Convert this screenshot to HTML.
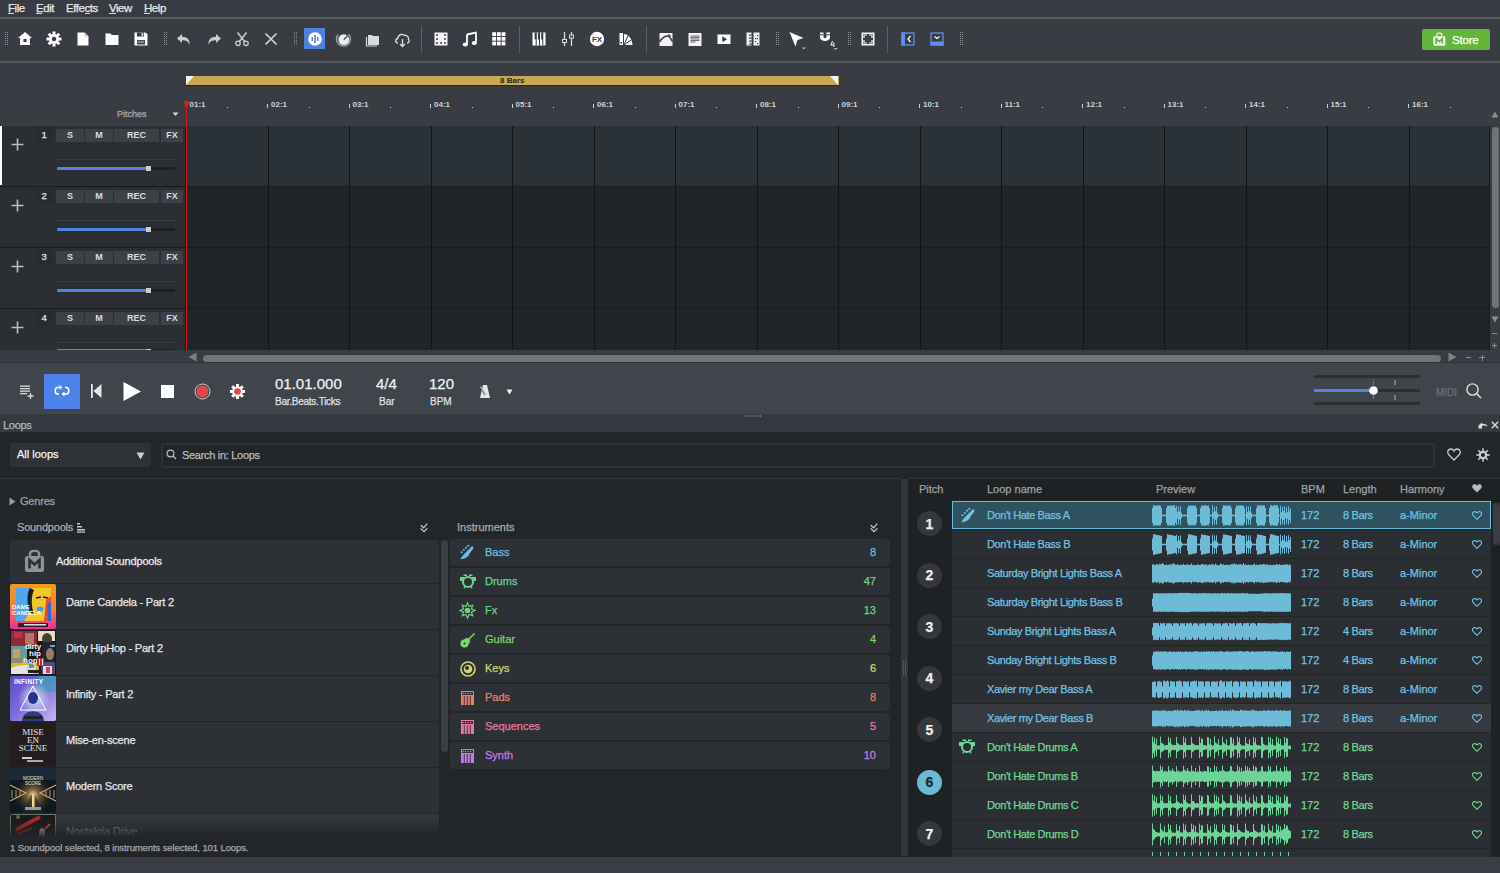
<!DOCTYPE html><html><head><meta charset="utf-8"><style>
html,body{margin:0;padding:0}
body{width:1500px;height:873px;overflow:hidden;position:relative;background:#24272a;font-family:"Liberation Sans", sans-serif;-webkit-text-stroke:0.25px currentColor}
div{box-sizing:border-box}
svg{position:absolute;overflow:visible}
.u{text-decoration:underline;text-underline-offset:2px}
</style></head><body>
<div style="position:absolute;left:0px;top:0px;width:1500px;height:17px;background:#383b41;"></div>
<div style="position:absolute;left:0px;top:17px;width:1500px;height:2px;background:#5b5e63;"></div>
<div style="position:absolute;left:8px;top:3px;font-size:11.5px;line-height:1;color:#e8e8e8;font-weight:normal;white-space:nowrap;letter-spacing:-0.45px">File</div>
<div style="position:absolute;left:8px;top:13px;width:6px;height:1px;background:#d8d8d8;"></div>
<div style="position:absolute;left:36px;top:3px;font-size:11.5px;line-height:1;color:#e8e8e8;font-weight:normal;white-space:nowrap;letter-spacing:-0.45px">Edit</div>
<div style="position:absolute;left:36px;top:13px;width:6px;height:1px;background:#d8d8d8;"></div>
<div style="position:absolute;left:66px;top:3px;font-size:11.5px;line-height:1;color:#e8e8e8;font-weight:normal;white-space:nowrap;letter-spacing:-0.45px">Effects</div>
<div style="position:absolute;left:85px;top:13px;width:5px;height:1px;background:#d8d8d8;"></div>
<div style="position:absolute;left:109px;top:3px;font-size:11.5px;line-height:1;color:#e8e8e8;font-weight:normal;white-space:nowrap;letter-spacing:-0.45px">View</div>
<div style="position:absolute;left:109px;top:13px;width:7px;height:1px;background:#d8d8d8;"></div>
<div style="position:absolute;left:144px;top:3px;font-size:11.5px;line-height:1;color:#e8e8e8;font-weight:normal;white-space:nowrap;letter-spacing:-0.45px">Help</div>
<div style="position:absolute;left:144px;top:13px;width:6px;height:1px;background:#d8d8d8;"></div>
<div style="position:absolute;left:0px;top:19px;width:1500px;height:42px;background:#393c42;"></div>
<div style="position:absolute;left:0px;top:61px;width:1500px;height:2px;background:#54575c;"></div>
<svg style="left:5px;top:32px;" width="3" height="14" viewBox="0 0 3 14"><rect x="0" y="0" width="1" height="1" fill="#8a8d92"/><rect x="0" y="2" width="1" height="1" fill="#8a8d92"/><rect x="0" y="4" width="1" height="1" fill="#8a8d92"/><rect x="0" y="6" width="1" height="1" fill="#8a8d92"/><rect x="0" y="8" width="1" height="1" fill="#8a8d92"/><rect x="0" y="10" width="1" height="1" fill="#8a8d92"/><rect x="0" y="12" width="1" height="1" fill="#8a8d92"/><rect x="2" y="0" width="1" height="1" fill="#8a8d92"/><rect x="2" y="2" width="1" height="1" fill="#8a8d92"/><rect x="2" y="4" width="1" height="1" fill="#8a8d92"/><rect x="2" y="6" width="1" height="1" fill="#8a8d92"/><rect x="2" y="8" width="1" height="1" fill="#8a8d92"/><rect x="2" y="10" width="1" height="1" fill="#8a8d92"/><rect x="2" y="12" width="1" height="1" fill="#8a8d92"/></svg>
<svg style="left:164px;top:32px;" width="3" height="14" viewBox="0 0 3 14"><rect x="0" y="0" width="1" height="1" fill="#8a8d92"/><rect x="0" y="2" width="1" height="1" fill="#8a8d92"/><rect x="0" y="4" width="1" height="1" fill="#8a8d92"/><rect x="0" y="6" width="1" height="1" fill="#8a8d92"/><rect x="0" y="8" width="1" height="1" fill="#8a8d92"/><rect x="0" y="10" width="1" height="1" fill="#8a8d92"/><rect x="0" y="12" width="1" height="1" fill="#8a8d92"/><rect x="2" y="0" width="1" height="1" fill="#8a8d92"/><rect x="2" y="2" width="1" height="1" fill="#8a8d92"/><rect x="2" y="4" width="1" height="1" fill="#8a8d92"/><rect x="2" y="6" width="1" height="1" fill="#8a8d92"/><rect x="2" y="8" width="1" height="1" fill="#8a8d92"/><rect x="2" y="10" width="1" height="1" fill="#8a8d92"/><rect x="2" y="12" width="1" height="1" fill="#8a8d92"/></svg>
<svg style="left:294px;top:32px;" width="3" height="14" viewBox="0 0 3 14"><rect x="0" y="0" width="1" height="1" fill="#8a8d92"/><rect x="0" y="2" width="1" height="1" fill="#8a8d92"/><rect x="0" y="4" width="1" height="1" fill="#8a8d92"/><rect x="0" y="6" width="1" height="1" fill="#8a8d92"/><rect x="0" y="8" width="1" height="1" fill="#8a8d92"/><rect x="0" y="10" width="1" height="1" fill="#8a8d92"/><rect x="0" y="12" width="1" height="1" fill="#8a8d92"/><rect x="2" y="0" width="1" height="1" fill="#8a8d92"/><rect x="2" y="2" width="1" height="1" fill="#8a8d92"/><rect x="2" y="4" width="1" height="1" fill="#8a8d92"/><rect x="2" y="6" width="1" height="1" fill="#8a8d92"/><rect x="2" y="8" width="1" height="1" fill="#8a8d92"/><rect x="2" y="10" width="1" height="1" fill="#8a8d92"/><rect x="2" y="12" width="1" height="1" fill="#8a8d92"/></svg>
<svg style="left:776px;top:32px;" width="3" height="14" viewBox="0 0 3 14"><rect x="0" y="0" width="1" height="1" fill="#8a8d92"/><rect x="0" y="2" width="1" height="1" fill="#8a8d92"/><rect x="0" y="4" width="1" height="1" fill="#8a8d92"/><rect x="0" y="6" width="1" height="1" fill="#8a8d92"/><rect x="0" y="8" width="1" height="1" fill="#8a8d92"/><rect x="0" y="10" width="1" height="1" fill="#8a8d92"/><rect x="0" y="12" width="1" height="1" fill="#8a8d92"/><rect x="2" y="0" width="1" height="1" fill="#8a8d92"/><rect x="2" y="2" width="1" height="1" fill="#8a8d92"/><rect x="2" y="4" width="1" height="1" fill="#8a8d92"/><rect x="2" y="6" width="1" height="1" fill="#8a8d92"/><rect x="2" y="8" width="1" height="1" fill="#8a8d92"/><rect x="2" y="10" width="1" height="1" fill="#8a8d92"/><rect x="2" y="12" width="1" height="1" fill="#8a8d92"/></svg>
<svg style="left:848px;top:32px;" width="3" height="14" viewBox="0 0 3 14"><rect x="0" y="0" width="1" height="1" fill="#8a8d92"/><rect x="0" y="2" width="1" height="1" fill="#8a8d92"/><rect x="0" y="4" width="1" height="1" fill="#8a8d92"/><rect x="0" y="6" width="1" height="1" fill="#8a8d92"/><rect x="0" y="8" width="1" height="1" fill="#8a8d92"/><rect x="0" y="10" width="1" height="1" fill="#8a8d92"/><rect x="0" y="12" width="1" height="1" fill="#8a8d92"/><rect x="2" y="0" width="1" height="1" fill="#8a8d92"/><rect x="2" y="2" width="1" height="1" fill="#8a8d92"/><rect x="2" y="4" width="1" height="1" fill="#8a8d92"/><rect x="2" y="6" width="1" height="1" fill="#8a8d92"/><rect x="2" y="8" width="1" height="1" fill="#8a8d92"/><rect x="2" y="10" width="1" height="1" fill="#8a8d92"/><rect x="2" y="12" width="1" height="1" fill="#8a8d92"/></svg>
<svg style="left:960px;top:32px;" width="3" height="14" viewBox="0 0 3 14"><rect x="0" y="0" width="1" height="1" fill="#8a8d92"/><rect x="0" y="2" width="1" height="1" fill="#8a8d92"/><rect x="0" y="4" width="1" height="1" fill="#8a8d92"/><rect x="0" y="6" width="1" height="1" fill="#8a8d92"/><rect x="0" y="8" width="1" height="1" fill="#8a8d92"/><rect x="0" y="10" width="1" height="1" fill="#8a8d92"/><rect x="0" y="12" width="1" height="1" fill="#8a8d92"/><rect x="2" y="0" width="1" height="1" fill="#8a8d92"/><rect x="2" y="2" width="1" height="1" fill="#8a8d92"/><rect x="2" y="4" width="1" height="1" fill="#8a8d92"/><rect x="2" y="6" width="1" height="1" fill="#8a8d92"/><rect x="2" y="8" width="1" height="1" fill="#8a8d92"/><rect x="2" y="10" width="1" height="1" fill="#8a8d92"/><rect x="2" y="12" width="1" height="1" fill="#8a8d92"/></svg>
<svg style="left:17.0px;top:31.0px;" width="16" height="16" viewBox="0 0 16 16"><path d="M8 1 L15 7 L13 7 L13 14 L3 14 L3 7 L1 7 Z" fill="#fff"/><rect x="6.5" y="8" width="3" height="3" fill="#393c42"/></svg>
<svg style="left:46.0px;top:31.0px;" width="16" height="16" viewBox="0 0 16 16"><rect x="6.5" y="0.5" width="3" height="4" fill="#fff" transform="rotate(0 8 8)"/><rect x="6.5" y="0.5" width="3" height="4" fill="#fff" transform="rotate(45 8 8)"/><rect x="6.5" y="0.5" width="3" height="4" fill="#fff" transform="rotate(90 8 8)"/><rect x="6.5" y="0.5" width="3" height="4" fill="#fff" transform="rotate(135 8 8)"/><rect x="6.5" y="0.5" width="3" height="4" fill="#fff" transform="rotate(180 8 8)"/><rect x="6.5" y="0.5" width="3" height="4" fill="#fff" transform="rotate(225 8 8)"/><rect x="6.5" y="0.5" width="3" height="4" fill="#fff" transform="rotate(270 8 8)"/><rect x="6.5" y="0.5" width="3" height="4" fill="#fff" transform="rotate(315 8 8)"/><circle cx="8" cy="8" r="5" fill="#fff"/><circle cx="8" cy="8" r="2.2" fill="#393c42"/></svg>
<svg style="left:75.0px;top:31.0px;" width="16" height="16" viewBox="0 0 16 16"><path d="M2.5 1.5 L9.5 1.5 L13.5 5.5 L13.5 14.5 L2.5 14.5 Z" fill="#fff"/><path d="M9.5 1.5 L9.5 5.5 L13.5 5.5" fill="#c9ccd0"/></svg>
<svg style="left:104.0px;top:31.0px;" width="16" height="16" viewBox="0 0 16 16"><path d="M1.5 2.5 L6.5 2.5 L8 4 L14.5 4 L14.5 14 L1.5 14 Z" fill="#fff"/></svg>
<svg style="left:133.0px;top:31.0px;" width="16" height="16" viewBox="0 0 16 16"><path d="M1.5 1.5 L12.5 1.5 L14.5 3.5 L14.5 14.5 L1.5 14.5 Z" fill="#fff"/><rect x="4" y="1.5" width="7" height="4" fill="#393c42"/><rect x="8.5" y="2.3" width="1.8" height="2.4" fill="#fff"/><rect x="4" y="9" width="8" height="4.5" fill="#393c42"/><rect x="4.5" y="9.8" width="7" height="0.8" fill="#aaa"/><rect x="4.5" y="11.3" width="7" height="0.8" fill="#aaa"/></svg>
<svg style="left:176.0px;top:31.0px;" width="16" height="16" viewBox="0 0 16 16"><path d="M6 3 L1 7.5 L6 12 L6 9.3 C10 9.3 12.5 10.5 13.5 14 C14 9 11.5 5.8 6 5.8 Z" fill="#c8cbd0"/></svg>
<svg style="left:206.0px;top:31.0px;" width="16" height="16" viewBox="0 0 16 16"><path d="M10 3 L15 7.5 L10 12 L10 9.3 C6 9.3 3.5 10.5 2.5 14 C2 9 4.5 5.8 10 5.8 Z" fill="#c8cbd0"/></svg>
<svg style="left:234.0px;top:31.0px;" width="16" height="16" viewBox="0 0 16 16"><path d="M3.5 1.5 L11 11 M12.5 1.5 L5 11" stroke="#c8cbd0" stroke-width="1.6"/><circle cx="4" cy="12.3" r="2.2" fill="none" stroke="#c8cbd0" stroke-width="1.3"/><circle cx="12" cy="12.3" r="2.2" fill="none" stroke="#c8cbd0" stroke-width="1.3"/></svg>
<svg style="left:263.0px;top:31.0px;" width="16" height="16" viewBox="0 0 16 16"><path d="M2.5 2.5 L13.5 13.5 M13.5 2.5 L2.5 13.5" stroke="#d0d3d7" stroke-width="1.7"/></svg>
<div style="position:absolute;left:304px;top:28px;width:21px;height:21px;background:#4f82e0;"></div>
<svg style="left:306.5px;top:31.0px;" width="16" height="16" viewBox="0 0 16 16"><circle cx="8" cy="8" r="6.8" fill="#fff"/><rect x="7.2" y="4" width="1.6" height="8" fill="#4f82e0"/><rect x="4.6" y="6" width="1.4" height="4" fill="#4f82e0"/><rect x="10" y="6" width="1.4" height="4" fill="#4f82e0"/></svg>
<svg style="left:335.0px;top:31.0px;" width="16" height="16" viewBox="0 0 16 16"><path d="M3.2 3.5 A7 7 0 1 0 13.5 3.2" stroke="#9fa2a7" stroke-width="1.4" fill="none"/><circle cx="8.8" cy="8.6" r="5.4" fill="#ececec"/><path d="M8.8 8.6 L12.6 4.8" stroke="#393c42" stroke-width="1.3"/></svg>
<svg style="left:365.0px;top:31.0px;" width="16" height="16" viewBox="0 0 16 16"><path d="M3 4 L7 4 L8 5 L14 5 L14 14 L3 14 Z" fill="#d8dbde"/><path d="M1.5 6 L1.5 15 L12 15" stroke="#d8dbde" stroke-width="1.2" fill="none"/></svg>
<svg style="left:394.0px;top:31.0px;" width="16" height="16" viewBox="0 0 16 16"><path d="M4 12 C1 12 1 7.5 3.8 7.5 C4 4 8 2 10.5 4.5 C13 4 15 6 14.5 8.5 C16 9.5 15 12 13 12" fill="none" stroke="#d8dbde" stroke-width="1.4"/><path d="M8.5 8 L8.5 15.5 M6 13 L8.5 15.5 L11 13" stroke="#d8dbde" stroke-width="1.4" fill="none"/></svg>
<div style="position:absolute;left:421px;top:26px;width:1px;height:27px;background:#5d6065;"></div>
<div style="position:absolute;left:519px;top:26px;width:1px;height:27px;background:#5d6065;"></div>
<div style="position:absolute;left:646px;top:26px;width:1px;height:27px;background:#5d6065;"></div>
<div style="position:absolute;left:887px;top:26px;width:1px;height:27px;background:#5d6065;"></div>
<svg style="left:433.0px;top:31.0px;" width="16" height="16" viewBox="0 0 16 16"><rect x="1.5" y="1.5" width="13" height="13" fill="#f2f2f2"/><rect x="3.2" y="3.2" width="1.7" height="1.7" fill="#393c42"/><rect x="11.1" y="3.2" width="1.7" height="1.7" fill="#393c42"/><rect x="3.2" y="7.2" width="1.7" height="1.7" fill="#393c42"/><rect x="11.1" y="7.2" width="1.7" height="1.7" fill="#393c42"/><rect x="3.2" y="11.1" width="1.7" height="1.7" fill="#393c42"/><rect x="7.2" y="11.1" width="1.7" height="1.7" fill="#393c42"/><rect x="11.1" y="11.1" width="1.7" height="1.7" fill="#393c42"/></svg>
<svg style="left:462.0px;top:31.0px;" width="16" height="16" viewBox="0 0 16 16"><path d="M5 3.5 L14 1.5 L14 12" stroke="#fff" stroke-width="1.8" fill="none"/><path d="M5 3.5 L5 13.5" stroke="#fff" stroke-width="1.8"/><ellipse cx="3.3" cy="13.5" rx="2.6" ry="2" fill="#fff"/><ellipse cx="12.3" cy="12" rx="2.6" ry="2" fill="#fff"/></svg>
<svg style="left:491.0px;top:31.0px;" width="16" height="16" viewBox="0 0 16 16"><rect x="1.2" y="1.2" width="3.8" height="3.8" fill="#fff"/><rect x="1.2" y="5.9" width="3.8" height="3.8" fill="#fff"/><rect x="1.2" y="10.6" width="3.8" height="3.8" fill="#fff"/><rect x="5.9" y="1.2" width="3.8" height="3.8" fill="#fff"/><rect x="5.9" y="5.9" width="3.8" height="3.8" fill="#fff"/><rect x="5.9" y="10.6" width="3.8" height="3.8" fill="#fff"/><rect x="10.6" y="1.2" width="3.8" height="3.8" fill="#fff"/><rect x="10.6" y="5.9" width="3.8" height="3.8" fill="#fff"/><rect x="10.6" y="10.6" width="3.8" height="3.8" fill="#fff"/></svg>
<svg style="left:531.0px;top:31.0px;" width="16" height="16" viewBox="0 0 16 16"><rect x="1.5" y="1.5" width="13" height="13" fill="#fff"/><rect x="4.7" y="1.5" width="1" height="13" fill="#393c42"/><rect x="8" y="1.5" width="1" height="13" fill="#393c42"/><rect x="11.3" y="1.5" width="1" height="13" fill="#393c42"/><rect x="3.6" y="1.5" width="1.8" height="7" fill="#393c42"/><rect x="6.9" y="1.5" width="1.8" height="7" fill="#393c42"/><rect x="10.2" y="1.5" width="1.8" height="7" fill="#393c42"/></svg>
<svg style="left:560.0px;top:31.0px;" width="16" height="16" viewBox="0 0 16 16"><path d="M4.5 1 L4.5 15 M11.5 1 L11.5 15" stroke="#d8dbde" stroke-width="1.3"/><rect x="2" y="8" width="5" height="4" fill="#d8dbde"/><rect x="9" y="3.5" width="5" height="4" fill="#d8dbde"/><rect x="3" y="9" width="3" height="2" fill="#393c42"/><rect x="10" y="4.5" width="3" height="2" fill="#393c42"/></svg>
<svg style="left:589.0px;top:31.0px;" width="16" height="16" viewBox="0 0 16 16"><circle cx="8" cy="8" r="7.2" fill="#fff"/><text x="8" y="11" font-size="8" font-weight="bold" text-anchor="middle" fill="#393c42" font-family="Liberation Sans">FX</text></svg>
<svg style="left:618.0px;top:31.0px;" width="16" height="16" viewBox="0 0 16 16"><rect x="1.5" y="2" width="3.5" height="12" fill="#fff"/><path d="M6 14 L6 3 C10 3 14 7 14.5 14 Z" fill="#fff"/><path d="M6 14 L10 4.5 M6 14 L13 9" stroke="#393c42" stroke-width="1"/><rect x="2.5" y="11" width="1.5" height="1.5" fill="#393c42"/></svg>
<svg style="left:657.5px;top:31.0px;" width="16" height="16" viewBox="0 0 16 16"><rect x="1.5" y="2" width="13" height="13" fill="#f2f2f2"/><path d="M1.5 11 C4 6.5 8 4.5 10.5 5.2 C11.5 5.5 12.5 7 14.5 10.5" stroke="#393c42" stroke-width="1.6" fill="none"/><path d="M10.5 3.5 L12.5 5.5" stroke="#393c42" stroke-width="1.2"/></svg>
<svg style="left:686.5px;top:31.0px;" width="16" height="16" viewBox="0 0 16 16"><rect x="1.5" y="2" width="13" height="13" fill="#f2f2f2"/><rect x="3.5" y="4.5" width="9" height="1" fill="#6a6d72"/><rect x="3.5" y="6" width="9" height="1" fill="#6a6d72"/><rect x="3.5" y="7.5" width="9" height="1" fill="#6a6d72"/><rect x="3.5" y="9" width="9" height="1" fill="#6a6d72"/><rect x="3.5" y="10.5" width="5" height="1" fill="#6a6d72"/></svg>
<svg style="left:715.5px;top:31.0px;" width="16" height="16" viewBox="0 0 16 16"><rect x="1.5" y="3.5" width="13" height="9.5" fill="#fff"/><path d="M6.3 5.3 L11 8.3 L6.3 11.3 Z" fill="#393c42"/></svg>
<svg style="left:745.0px;top:31.0px;" width="16" height="16" viewBox="0 0 16 16"><rect x="1.5" y="1.5" width="5" height="13" fill="#f2f2f2"/><rect x="8.5" y="1.5" width="6" height="13" fill="#f2f2f2"/><rect x="4" y="3.5" width="2.5" height="1.2" fill="#393c42"/><rect x="4" y="6.5" width="2.5" height="1.2" fill="#393c42"/><rect x="4" y="9.5" width="2.5" height="1.2" fill="#393c42"/><rect x="4" y="12.5" width="2.5" height="1.2" fill="#393c42"/><rect x="12" y="4" width="1.2" height="1.2" fill="#393c42"/><rect x="10" y="7" width="1.2" height="1.2" fill="#393c42"/><rect x="12" y="7" width="1.2" height="1.2" fill="#393c42"/><rect x="10" y="10" width="1.2" height="1.2" fill="#393c42"/><rect x="12" y="12" width="1.2" height="1.2" fill="#393c42"/></svg>
<svg style="left:788.0px;top:30.5px;" width="18" height="18" viewBox="0 0 18 18"><path d="M1.5 1 L15.5 7 L9.5 9 L7.5 15.5 Z" fill="#fff"/><path d="M13.5 16.5 L18 16.5 L15.75 18.5 Z" fill="#aaadb2"/></svg>
<svg style="left:819.0px;top:30.5px;" width="18" height="18" viewBox="0 0 18 18"><path d="M1 1.5 L4.5 1.5 L4.5 6 C4.5 7.6 7.5 7.6 7.5 6 L7.5 1.5 L11 1.5 L11 6.5 C11 11 1 11 1 6.5 Z" fill="#fff"/><rect x="1" y="3.3" width="3.5" height="1" fill="#393c42"/><rect x="7.5" y="3.3" width="3.5" height="1" fill="#393c42"/><path d="M13.5 10 L12 14 L15.5 14 M14.8 11.5 L14.8 16" stroke="#e6e6e6" stroke-width="1.1" fill="none"/><path d="M14.5 17 L19 17 L16.75 19 Z" fill="#aaadb2"/></svg>
<svg style="left:860.0px;top:31.0px;" width="16" height="16" viewBox="0 0 16 16"><rect x="1.5" y="1.5" width="13" height="13" fill="#f4f4f4"/><rect x="3" y="3" width="10" height="10" fill="#393c42"/><path d="M4 7 L4 4 L7 4 M9 4 L12 4 L12 7 M12 9 L12 12 L9 12 M7 12 L4 12 L4 9" stroke="#f4f4f4" stroke-width="1.2" fill="none"/></svg>
<svg style="left:899.5px;top:31.0px;" width="16" height="16" viewBox="0 0 16 16"><rect x="2" y="2" width="12" height="12" fill="none" stroke="#5a8ef0" stroke-width="1.3"/><rect x="1.5" y="1.5" width="3.5" height="13" fill="#5a8ef0"/><path d="M10.5 5 L8 8 L10.5 11" stroke="#fff" stroke-width="1.2" fill="none"/></svg>
<svg style="left:929.0px;top:31.0px;" width="16" height="16" viewBox="0 0 16 16"><rect x="2" y="2" width="12" height="12" fill="none" stroke="#5a8ef0" stroke-width="1.3"/><rect x="1.5" y="10.5" width="13" height="4" fill="#5a8ef0"/><path d="M5.5 5.5 L8 7.5 L10.5 5.5" stroke="#fff" stroke-width="1.2" fill="none"/></svg>
<div style="position:absolute;left:1422px;top:29px;width:68px;height:21px;background:#64b63a;border-radius:2px"></div>
<svg style="left:1433px;top:32px;" width="13" height="14" viewBox="0 0 13 14"><path d="M3.8 4.5 L3.8 2.6 C3.8 0.6 8.7 0.6 8.7 2.6 L8.7 4.5" stroke="#f4f0f4" stroke-width="1.2" fill="none"/><rect x="0.3" y="4.3" width="12" height="9.4" rx="0.8" fill="#f4f0f4"/><path d="M3.2 11.8 L3.2 6.8 L6.25 9.6 L9.3 6.8 L9.3 11.8" stroke="#64b63a" stroke-width="1.7" fill="none" stroke-linejoin="miter"/></svg>
<div style="position:absolute;left:1452px;top:35px;font-size:11.5px;line-height:1;color:#ffffff;font-weight:normal;white-space:nowrap;letter-spacing:-0.2px">Store</div>
<div style="position:absolute;left:0px;top:63px;width:1500px;height:63px;background:#393c42;"></div>
<div style="position:absolute;left:186px;top:76px;width:653px;height:9px;background:#c6a955;"></div>
<div style="position:absolute;left:186px;top:85px;width:653px;height:1px;background:#23262a;"></div>
<svg style="left:186px;top:76px;" width="8" height="9" viewBox="0 0 8 9"><path d="M0 0 L8 0 L0 9 Z" fill="#f2f2f2"/></svg>
<svg style="left:830px;top:76px;" width="8" height="9" viewBox="0 0 8 9"><path d="M0 0 L8 0 L8 9 Z" fill="#f2f2f2"/></svg>
<div style="position:absolute;left:500px;top:77px;font-size:8px;line-height:1;color:#2a2410;font-weight:bold;white-space:nowrap;;-webkit-text-stroke:0">8 Bars</div>
<div style="position:absolute;left:189.5px;top:101px;font-size:8px;line-height:1;color:#c9d3de;font-weight:bold;white-space:nowrap;;-webkit-text-stroke:0">01:1</div>
<div style="position:absolute;left:227.25px;top:107px;width:1px;height:1px;background:#c8d0d8;"></div>
<div style="position:absolute;left:267.0px;top:104px;width:1px;height:4px;background:#c8d0d8;"></div>
<div style="position:absolute;left:271.0px;top:101px;font-size:8px;line-height:1;color:#c9d3de;font-weight:bold;white-space:nowrap;;-webkit-text-stroke:0">02:1</div>
<div style="position:absolute;left:308.75px;top:107px;width:1px;height:1px;background:#c8d0d8;"></div>
<div style="position:absolute;left:348.5px;top:104px;width:1px;height:4px;background:#c8d0d8;"></div>
<div style="position:absolute;left:352.5px;top:101px;font-size:8px;line-height:1;color:#c9d3de;font-weight:bold;white-space:nowrap;;-webkit-text-stroke:0">03:1</div>
<div style="position:absolute;left:390.25px;top:107px;width:1px;height:1px;background:#c8d0d8;"></div>
<div style="position:absolute;left:430.0px;top:104px;width:1px;height:4px;background:#c8d0d8;"></div>
<div style="position:absolute;left:434.0px;top:101px;font-size:8px;line-height:1;color:#c9d3de;font-weight:bold;white-space:nowrap;;-webkit-text-stroke:0">04:1</div>
<div style="position:absolute;left:471.75px;top:107px;width:1px;height:1px;background:#c8d0d8;"></div>
<div style="position:absolute;left:511.5px;top:104px;width:1px;height:4px;background:#c8d0d8;"></div>
<div style="position:absolute;left:515.5px;top:101px;font-size:8px;line-height:1;color:#c9d3de;font-weight:bold;white-space:nowrap;;-webkit-text-stroke:0">05:1</div>
<div style="position:absolute;left:553.25px;top:107px;width:1px;height:1px;background:#c8d0d8;"></div>
<div style="position:absolute;left:593.0px;top:104px;width:1px;height:4px;background:#c8d0d8;"></div>
<div style="position:absolute;left:597.0px;top:101px;font-size:8px;line-height:1;color:#c9d3de;font-weight:bold;white-space:nowrap;;-webkit-text-stroke:0">06:1</div>
<div style="position:absolute;left:634.75px;top:107px;width:1px;height:1px;background:#c8d0d8;"></div>
<div style="position:absolute;left:674.5px;top:104px;width:1px;height:4px;background:#c8d0d8;"></div>
<div style="position:absolute;left:678.5px;top:101px;font-size:8px;line-height:1;color:#c9d3de;font-weight:bold;white-space:nowrap;;-webkit-text-stroke:0">07:1</div>
<div style="position:absolute;left:716.25px;top:107px;width:1px;height:1px;background:#c8d0d8;"></div>
<div style="position:absolute;left:756.0px;top:104px;width:1px;height:4px;background:#c8d0d8;"></div>
<div style="position:absolute;left:760.0px;top:101px;font-size:8px;line-height:1;color:#c9d3de;font-weight:bold;white-space:nowrap;;-webkit-text-stroke:0">08:1</div>
<div style="position:absolute;left:797.75px;top:107px;width:1px;height:1px;background:#c8d0d8;"></div>
<div style="position:absolute;left:837.5px;top:104px;width:1px;height:4px;background:#c8d0d8;"></div>
<div style="position:absolute;left:841.5px;top:101px;font-size:8px;line-height:1;color:#c9d3de;font-weight:bold;white-space:nowrap;;-webkit-text-stroke:0">09:1</div>
<div style="position:absolute;left:879.25px;top:107px;width:1px;height:1px;background:#c8d0d8;"></div>
<div style="position:absolute;left:919.0px;top:104px;width:1px;height:4px;background:#c8d0d8;"></div>
<div style="position:absolute;left:923.0px;top:101px;font-size:8px;line-height:1;color:#c9d3de;font-weight:bold;white-space:nowrap;;-webkit-text-stroke:0">10:1</div>
<div style="position:absolute;left:960.75px;top:107px;width:1px;height:1px;background:#c8d0d8;"></div>
<div style="position:absolute;left:1000.5px;top:104px;width:1px;height:4px;background:#c8d0d8;"></div>
<div style="position:absolute;left:1004.5px;top:101px;font-size:8px;line-height:1;color:#c9d3de;font-weight:bold;white-space:nowrap;;-webkit-text-stroke:0">11:1</div>
<div style="position:absolute;left:1042.25px;top:107px;width:1px;height:1px;background:#c8d0d8;"></div>
<div style="position:absolute;left:1082.0px;top:104px;width:1px;height:4px;background:#c8d0d8;"></div>
<div style="position:absolute;left:1086.0px;top:101px;font-size:8px;line-height:1;color:#c9d3de;font-weight:bold;white-space:nowrap;;-webkit-text-stroke:0">12:1</div>
<div style="position:absolute;left:1123.75px;top:107px;width:1px;height:1px;background:#c8d0d8;"></div>
<div style="position:absolute;left:1163.5px;top:104px;width:1px;height:4px;background:#c8d0d8;"></div>
<div style="position:absolute;left:1167.5px;top:101px;font-size:8px;line-height:1;color:#c9d3de;font-weight:bold;white-space:nowrap;;-webkit-text-stroke:0">13:1</div>
<div style="position:absolute;left:1205.25px;top:107px;width:1px;height:1px;background:#c8d0d8;"></div>
<div style="position:absolute;left:1245.0px;top:104px;width:1px;height:4px;background:#c8d0d8;"></div>
<div style="position:absolute;left:1249.0px;top:101px;font-size:8px;line-height:1;color:#c9d3de;font-weight:bold;white-space:nowrap;;-webkit-text-stroke:0">14:1</div>
<div style="position:absolute;left:1286.75px;top:107px;width:1px;height:1px;background:#c8d0d8;"></div>
<div style="position:absolute;left:1326.5px;top:104px;width:1px;height:4px;background:#c8d0d8;"></div>
<div style="position:absolute;left:1330.5px;top:101px;font-size:8px;line-height:1;color:#c9d3de;font-weight:bold;white-space:nowrap;;-webkit-text-stroke:0">15:1</div>
<div style="position:absolute;left:1368.25px;top:107px;width:1px;height:1px;background:#c8d0d8;"></div>
<div style="position:absolute;left:1408.0px;top:104px;width:1px;height:4px;background:#c8d0d8;"></div>
<div style="position:absolute;left:1412.0px;top:101px;font-size:8px;line-height:1;color:#c9d3de;font-weight:bold;white-space:nowrap;;-webkit-text-stroke:0">16:1</div>
<div style="position:absolute;left:1449.75px;top:107px;width:1px;height:1px;background:#c8d0d8;"></div>
<div style="position:absolute;left:117px;top:110px;font-size:9px;line-height:1;color:#a9adb2;font-weight:normal;white-space:nowrap;">Pitches</div>
<svg style="left:172px;top:112px;" width="7" height="5" viewBox="0 0 7 5"><path d="M0.5 0.5 L6.5 0.5 L3.5 4 Z" fill="#d5d8dc"/></svg>
<div style="position:absolute;left:0px;top:126px;width:1490px;height:224px;background:#1a1c1f;"></div>
<div style="position:absolute;left:0px;top:126px;width:185px;height:59.5px;background:#2b2e32;"></div>
<div style="position:absolute;left:187px;top:126px;width:1302px;height:59.5px;background:#2a3237;"></div>
<div style="position:absolute;left:268px;top:126px;width:1px;height:61.5px;background:#111316;"></div>
<div style="position:absolute;left:349px;top:126px;width:1px;height:61.5px;background:#111316;"></div>
<div style="position:absolute;left:431px;top:126px;width:1px;height:61.5px;background:#111316;"></div>
<div style="position:absolute;left:512px;top:126px;width:1px;height:61.5px;background:#111316;"></div>
<div style="position:absolute;left:594px;top:126px;width:1px;height:61.5px;background:#111316;"></div>
<div style="position:absolute;left:675px;top:126px;width:1px;height:61.5px;background:#111316;"></div>
<div style="position:absolute;left:757px;top:126px;width:1px;height:61.5px;background:#111316;"></div>
<div style="position:absolute;left:838px;top:126px;width:1px;height:61.5px;background:#111316;"></div>
<div style="position:absolute;left:920px;top:126px;width:1px;height:61.5px;background:#111316;"></div>
<div style="position:absolute;left:1001px;top:126px;width:1px;height:61.5px;background:#111316;"></div>
<div style="position:absolute;left:1083px;top:126px;width:1px;height:61.5px;background:#111316;"></div>
<div style="position:absolute;left:1164px;top:126px;width:1px;height:61.5px;background:#111316;"></div>
<div style="position:absolute;left:1246px;top:126px;width:1px;height:61.5px;background:#111316;"></div>
<div style="position:absolute;left:1327px;top:126px;width:1px;height:61.5px;background:#111316;"></div>
<div style="position:absolute;left:1409px;top:126px;width:1px;height:61.5px;background:#111316;"></div>
<div style="position:absolute;left:12px;top:137px;font-size:0px;line-height:1;color:#fff;font-weight:normal;white-space:nowrap;">+</div>
<svg style="left:11px;top:138px;" width="13" height="13" viewBox="0 0 13 13"><path d="M6.5 0.5 L6.5 12.5 M0.5 6.5 L12.5 6.5" stroke="#b9bcc0" stroke-width="1.6"/></svg>
<div style="position:absolute;left:35px;top:127px;width:19px;height:16px;background:#282b2f;"></div>
<div style="position:absolute;left:41.5px;top:130px;font-size:9.5px;line-height:1;color:#e3e8ee;font-weight:normal;white-space:nowrap;">1</div>
<div style="position:absolute;left:56px;top:128.5px;width:28px;height:13px;background:#3c4047;"></div>
<div style="position:absolute;left:56px;top:130.5px;width:28px;text-align:center;font-size:9px;line-height:1;color:#dadde0;font-weight:bold;-webkit-text-stroke:0">S</div>
<div style="position:absolute;left:85px;top:128.5px;width:28px;height:13px;background:#3c4047;"></div>
<div style="position:absolute;left:85px;top:130.5px;width:28px;text-align:center;font-size:9px;line-height:1;color:#dadde0;font-weight:bold;-webkit-text-stroke:0">M</div>
<div style="position:absolute;left:114px;top:128.5px;width:45px;height:13px;background:#3c4047;"></div>
<div style="position:absolute;left:114px;top:130.5px;width:45px;text-align:center;font-size:9px;line-height:1;color:#dadde0;font-weight:bold;-webkit-text-stroke:0">REC</div>
<div style="position:absolute;left:161px;top:128.5px;width:22px;height:13px;background:#3c4047;"></div>
<div style="position:absolute;left:161px;top:130.5px;width:22px;text-align:center;font-size:9px;line-height:1;color:#dadde0;font-weight:bold;-webkit-text-stroke:0">FX</div>
<svg style="left:56px;top:159px;" width="120" height="1" viewBox="0 0 120 1"><path d="M0 0.5 L120 0.5" stroke="#46494e" stroke-dasharray="1 1"/></svg>
<div style="position:absolute;left:57px;top:167px;width:118px;height:3px;background:#1d1f22;"></div>
<div style="position:absolute;left:57px;top:167px;width:91px;height:3px;background:#4f86e6;border-radius:1px"></div>
<div style="position:absolute;left:146px;top:166px;width:5px;height:5px;background:#c9ccd0;"></div>
<div style="position:absolute;left:0px;top:187px;width:185px;height:59.5px;background:#2b2e32;"></div>
<div style="position:absolute;left:187px;top:187px;width:1302px;height:59.5px;background:#222528;"></div>
<div style="position:absolute;left:268px;top:187px;width:1px;height:61.5px;background:#111316;"></div>
<div style="position:absolute;left:349px;top:187px;width:1px;height:61.5px;background:#111316;"></div>
<div style="position:absolute;left:431px;top:187px;width:1px;height:61.5px;background:#111316;"></div>
<div style="position:absolute;left:512px;top:187px;width:1px;height:61.5px;background:#111316;"></div>
<div style="position:absolute;left:594px;top:187px;width:1px;height:61.5px;background:#111316;"></div>
<div style="position:absolute;left:675px;top:187px;width:1px;height:61.5px;background:#111316;"></div>
<div style="position:absolute;left:757px;top:187px;width:1px;height:61.5px;background:#111316;"></div>
<div style="position:absolute;left:838px;top:187px;width:1px;height:61.5px;background:#111316;"></div>
<div style="position:absolute;left:920px;top:187px;width:1px;height:61.5px;background:#111316;"></div>
<div style="position:absolute;left:1001px;top:187px;width:1px;height:61.5px;background:#111316;"></div>
<div style="position:absolute;left:1083px;top:187px;width:1px;height:61.5px;background:#111316;"></div>
<div style="position:absolute;left:1164px;top:187px;width:1px;height:61.5px;background:#111316;"></div>
<div style="position:absolute;left:1246px;top:187px;width:1px;height:61.5px;background:#111316;"></div>
<div style="position:absolute;left:1327px;top:187px;width:1px;height:61.5px;background:#111316;"></div>
<div style="position:absolute;left:1409px;top:187px;width:1px;height:61.5px;background:#111316;"></div>
<div style="position:absolute;left:12px;top:198px;font-size:0px;line-height:1;color:#fff;font-weight:normal;white-space:nowrap;">+</div>
<svg style="left:11px;top:199px;" width="13" height="13" viewBox="0 0 13 13"><path d="M6.5 0.5 L6.5 12.5 M0.5 6.5 L12.5 6.5" stroke="#b9bcc0" stroke-width="1.6"/></svg>
<div style="position:absolute;left:35px;top:188px;width:19px;height:16px;background:#282b2f;"></div>
<div style="position:absolute;left:41.5px;top:191px;font-size:9.5px;line-height:1;color:#e3e8ee;font-weight:normal;white-space:nowrap;">2</div>
<div style="position:absolute;left:56px;top:189.5px;width:28px;height:13px;background:#3c4047;"></div>
<div style="position:absolute;left:56px;top:191.5px;width:28px;text-align:center;font-size:9px;line-height:1;color:#dadde0;font-weight:bold;-webkit-text-stroke:0">S</div>
<div style="position:absolute;left:85px;top:189.5px;width:28px;height:13px;background:#3c4047;"></div>
<div style="position:absolute;left:85px;top:191.5px;width:28px;text-align:center;font-size:9px;line-height:1;color:#dadde0;font-weight:bold;-webkit-text-stroke:0">M</div>
<div style="position:absolute;left:114px;top:189.5px;width:45px;height:13px;background:#3c4047;"></div>
<div style="position:absolute;left:114px;top:191.5px;width:45px;text-align:center;font-size:9px;line-height:1;color:#dadde0;font-weight:bold;-webkit-text-stroke:0">REC</div>
<div style="position:absolute;left:161px;top:189.5px;width:22px;height:13px;background:#3c4047;"></div>
<div style="position:absolute;left:161px;top:191.5px;width:22px;text-align:center;font-size:9px;line-height:1;color:#dadde0;font-weight:bold;-webkit-text-stroke:0">FX</div>
<svg style="left:56px;top:220px;" width="120" height="1" viewBox="0 0 120 1"><path d="M0 0.5 L120 0.5" stroke="#46494e" stroke-dasharray="1 1"/></svg>
<div style="position:absolute;left:57px;top:228px;width:118px;height:3px;background:#1d1f22;"></div>
<div style="position:absolute;left:57px;top:228px;width:91px;height:3px;background:#4f86e6;border-radius:1px"></div>
<div style="position:absolute;left:146px;top:227px;width:5px;height:5px;background:#c9ccd0;"></div>
<div style="position:absolute;left:0px;top:248px;width:185px;height:59.5px;background:#2b2e32;"></div>
<div style="position:absolute;left:187px;top:248px;width:1302px;height:59.5px;background:#222528;"></div>
<div style="position:absolute;left:268px;top:248px;width:1px;height:61.5px;background:#111316;"></div>
<div style="position:absolute;left:349px;top:248px;width:1px;height:61.5px;background:#111316;"></div>
<div style="position:absolute;left:431px;top:248px;width:1px;height:61.5px;background:#111316;"></div>
<div style="position:absolute;left:512px;top:248px;width:1px;height:61.5px;background:#111316;"></div>
<div style="position:absolute;left:594px;top:248px;width:1px;height:61.5px;background:#111316;"></div>
<div style="position:absolute;left:675px;top:248px;width:1px;height:61.5px;background:#111316;"></div>
<div style="position:absolute;left:757px;top:248px;width:1px;height:61.5px;background:#111316;"></div>
<div style="position:absolute;left:838px;top:248px;width:1px;height:61.5px;background:#111316;"></div>
<div style="position:absolute;left:920px;top:248px;width:1px;height:61.5px;background:#111316;"></div>
<div style="position:absolute;left:1001px;top:248px;width:1px;height:61.5px;background:#111316;"></div>
<div style="position:absolute;left:1083px;top:248px;width:1px;height:61.5px;background:#111316;"></div>
<div style="position:absolute;left:1164px;top:248px;width:1px;height:61.5px;background:#111316;"></div>
<div style="position:absolute;left:1246px;top:248px;width:1px;height:61.5px;background:#111316;"></div>
<div style="position:absolute;left:1327px;top:248px;width:1px;height:61.5px;background:#111316;"></div>
<div style="position:absolute;left:1409px;top:248px;width:1px;height:61.5px;background:#111316;"></div>
<div style="position:absolute;left:12px;top:259px;font-size:0px;line-height:1;color:#fff;font-weight:normal;white-space:nowrap;">+</div>
<svg style="left:11px;top:260px;" width="13" height="13" viewBox="0 0 13 13"><path d="M6.5 0.5 L6.5 12.5 M0.5 6.5 L12.5 6.5" stroke="#b9bcc0" stroke-width="1.6"/></svg>
<div style="position:absolute;left:35px;top:249px;width:19px;height:16px;background:#282b2f;"></div>
<div style="position:absolute;left:41.5px;top:252px;font-size:9.5px;line-height:1;color:#e3e8ee;font-weight:normal;white-space:nowrap;">3</div>
<div style="position:absolute;left:56px;top:250.5px;width:28px;height:13px;background:#3c4047;"></div>
<div style="position:absolute;left:56px;top:252.5px;width:28px;text-align:center;font-size:9px;line-height:1;color:#dadde0;font-weight:bold;-webkit-text-stroke:0">S</div>
<div style="position:absolute;left:85px;top:250.5px;width:28px;height:13px;background:#3c4047;"></div>
<div style="position:absolute;left:85px;top:252.5px;width:28px;text-align:center;font-size:9px;line-height:1;color:#dadde0;font-weight:bold;-webkit-text-stroke:0">M</div>
<div style="position:absolute;left:114px;top:250.5px;width:45px;height:13px;background:#3c4047;"></div>
<div style="position:absolute;left:114px;top:252.5px;width:45px;text-align:center;font-size:9px;line-height:1;color:#dadde0;font-weight:bold;-webkit-text-stroke:0">REC</div>
<div style="position:absolute;left:161px;top:250.5px;width:22px;height:13px;background:#3c4047;"></div>
<div style="position:absolute;left:161px;top:252.5px;width:22px;text-align:center;font-size:9px;line-height:1;color:#dadde0;font-weight:bold;-webkit-text-stroke:0">FX</div>
<svg style="left:56px;top:281px;" width="120" height="1" viewBox="0 0 120 1"><path d="M0 0.5 L120 0.5" stroke="#46494e" stroke-dasharray="1 1"/></svg>
<div style="position:absolute;left:57px;top:289px;width:118px;height:3px;background:#1d1f22;"></div>
<div style="position:absolute;left:57px;top:289px;width:91px;height:3px;background:#4f86e6;border-radius:1px"></div>
<div style="position:absolute;left:146px;top:288px;width:5px;height:5px;background:#c9ccd0;"></div>
<div style="position:absolute;left:0px;top:309px;width:185px;height:59.5px;background:#2b2e32;"></div>
<div style="position:absolute;left:187px;top:309px;width:1302px;height:59.5px;background:#222528;"></div>
<div style="position:absolute;left:268px;top:309px;width:1px;height:61.5px;background:#111316;"></div>
<div style="position:absolute;left:349px;top:309px;width:1px;height:61.5px;background:#111316;"></div>
<div style="position:absolute;left:431px;top:309px;width:1px;height:61.5px;background:#111316;"></div>
<div style="position:absolute;left:512px;top:309px;width:1px;height:61.5px;background:#111316;"></div>
<div style="position:absolute;left:594px;top:309px;width:1px;height:61.5px;background:#111316;"></div>
<div style="position:absolute;left:675px;top:309px;width:1px;height:61.5px;background:#111316;"></div>
<div style="position:absolute;left:757px;top:309px;width:1px;height:61.5px;background:#111316;"></div>
<div style="position:absolute;left:838px;top:309px;width:1px;height:61.5px;background:#111316;"></div>
<div style="position:absolute;left:920px;top:309px;width:1px;height:61.5px;background:#111316;"></div>
<div style="position:absolute;left:1001px;top:309px;width:1px;height:61.5px;background:#111316;"></div>
<div style="position:absolute;left:1083px;top:309px;width:1px;height:61.5px;background:#111316;"></div>
<div style="position:absolute;left:1164px;top:309px;width:1px;height:61.5px;background:#111316;"></div>
<div style="position:absolute;left:1246px;top:309px;width:1px;height:61.5px;background:#111316;"></div>
<div style="position:absolute;left:1327px;top:309px;width:1px;height:61.5px;background:#111316;"></div>
<div style="position:absolute;left:1409px;top:309px;width:1px;height:61.5px;background:#111316;"></div>
<div style="position:absolute;left:12px;top:320px;font-size:0px;line-height:1;color:#fff;font-weight:normal;white-space:nowrap;">+</div>
<svg style="left:11px;top:321px;" width="13" height="13" viewBox="0 0 13 13"><path d="M6.5 0.5 L6.5 12.5 M0.5 6.5 L12.5 6.5" stroke="#b9bcc0" stroke-width="1.6"/></svg>
<div style="position:absolute;left:35px;top:310px;width:19px;height:16px;background:#282b2f;"></div>
<div style="position:absolute;left:41.5px;top:313px;font-size:9.5px;line-height:1;color:#e3e8ee;font-weight:normal;white-space:nowrap;">4</div>
<div style="position:absolute;left:56px;top:311.5px;width:28px;height:13px;background:#3c4047;"></div>
<div style="position:absolute;left:56px;top:313.5px;width:28px;text-align:center;font-size:9px;line-height:1;color:#dadde0;font-weight:bold;-webkit-text-stroke:0">S</div>
<div style="position:absolute;left:85px;top:311.5px;width:28px;height:13px;background:#3c4047;"></div>
<div style="position:absolute;left:85px;top:313.5px;width:28px;text-align:center;font-size:9px;line-height:1;color:#dadde0;font-weight:bold;-webkit-text-stroke:0">M</div>
<div style="position:absolute;left:114px;top:311.5px;width:45px;height:13px;background:#3c4047;"></div>
<div style="position:absolute;left:114px;top:313.5px;width:45px;text-align:center;font-size:9px;line-height:1;color:#dadde0;font-weight:bold;-webkit-text-stroke:0">REC</div>
<div style="position:absolute;left:161px;top:311.5px;width:22px;height:13px;background:#3c4047;"></div>
<div style="position:absolute;left:161px;top:313.5px;width:22px;text-align:center;font-size:9px;line-height:1;color:#dadde0;font-weight:bold;-webkit-text-stroke:0">FX</div>
<svg style="left:56px;top:342px;" width="120" height="1" viewBox="0 0 120 1"><path d="M0 0.5 L120 0.5" stroke="#46494e" stroke-dasharray="1 1"/></svg>
<div style="position:absolute;left:57px;top:350px;width:118px;height:3px;background:#1d1f22;"></div>
<div style="position:absolute;left:57px;top:350px;width:91px;height:3px;background:#4f86e6;border-radius:1px"></div>
<div style="position:absolute;left:146px;top:349px;width:5px;height:5px;background:#c9ccd0;"></div>
<div style="position:absolute;left:0px;top:126px;width:2px;height:59px;background:#ffffff;"></div>
<div style="position:absolute;left:186px;top:101px;width:1px;height:249px;background:#d41717;"></div>
<svg style="left:183px;top:101px;" width="7" height="7" viewBox="0 0 7 7"><path d="M0 0 L7 0 L3.5 7 Z" fill="#e01b1b"/></svg>
<div style="position:absolute;left:1490px;top:110px;width:10px;height:240px;background:#393c42;"></div>
<svg style="left:1491px;top:111px;" width="8" height="7" viewBox="0 0 8 7"><path d="M0.5 6.5 L4 0.5 L7.5 6.5 Z" fill="#8a8d92"/></svg>
<div style="position:absolute;left:1492px;top:127px;width:7px;height:181px;background:#6f7478;border-radius:3.5px"></div>
<svg style="left:1491px;top:316px;" width="8" height="7" viewBox="0 0 8 7"><path d="M0.5 0.5 L4 6.5 L7.5 0.5 Z" fill="#8a8d92"/></svg>
<div style="position:absolute;left:1492px;top:333px;width:5px;height:1px;background:#8a8d92;"></div>
<div style="position:absolute;left:1492px;top:345px;width:5px;height:1px;background:#8a8d92;"></div>
<div style="position:absolute;left:1494px;top:343px;width:1px;height:5px;background:#8a8d92;"></div>
<div style="position:absolute;left:0px;top:350px;width:1500px;height:13px;background:#383c42;"></div>
<svg style="left:188px;top:352px;" width="9" height="10" viewBox="0 0 9 10"><path d="M0.5 5 L8.5 0.5 L8.5 9.5 Z" fill="#7d8085"/></svg>
<div style="position:absolute;left:203px;top:355px;width:1238px;height:7px;background:#6f7478;border-radius:3.5px"></div>
<div style="position:absolute;left:0px;top:362px;width:1500px;height:2px;background:#30343a;"></div>
<div style="position:absolute;left:57px;top:349px;width:91px;height:1px;background:#4f86e6;"></div>
<div style="position:absolute;left:148px;top:349px;width:27px;height:1px;background:#1d1f22;"></div>
<div style="position:absolute;left:146px;top:349px;width:5px;height:1px;background:#c9ccd0;"></div>
<svg style="left:1448px;top:352px;" width="9" height="10" viewBox="0 0 9 10"><path d="M8.5 5 L0.5 0.5 L0.5 9.5 Z" fill="#7d8085"/></svg>
<div style="position:absolute;left:1466px;top:357px;width:5px;height:1px;background:#8a8d92;"></div>
<div style="position:absolute;left:1479px;top:357px;width:6px;height:1px;background:#8a8d92;"></div>
<div style="position:absolute;left:1481.5px;top:354.5px;width:1px;height:6px;background:#8a8d92;"></div>
<div style="position:absolute;left:0px;top:363px;width:1500px;height:51px;background:#3f454b;"></div>
<div style="position:absolute;left:44px;top:374px;width:36px;height:35px;background:#4f82e8;"></div>
<svg style="left:20px;top:385px;" width="14" height="14" viewBox="0 0 14 14"><rect x="0" y="0.5" width="10" height="1.3" fill="#d8dbde"/><rect x="0" y="3" width="10" height="1.3" fill="#d8dbde"/><rect x="0" y="5.5" width="10" height="1.3" fill="#d8dbde"/><rect x="0" y="8" width="7" height="1.3" fill="#d8dbde"/><path d="M10.5 8 L10.5 14 M7.5 11 L13.5 11" stroke="#d8dbde" stroke-width="1.3"/></svg>
<svg style="left:53px;top:383px;" width="18" height="16" viewBox="0 0 18 16"><path d="M7.5 4.5 L4.5 4.5 C1.5 4.5 1.5 11 4.5 11 L6 11" stroke="#fff" stroke-width="1.6" fill="none"/><path d="M10.5 11 L13.5 11 C16.5 11 16.5 4.5 13.5 4.5 L12 4.5" stroke="#fff" stroke-width="1.6" fill="none"/><path d="M6.5 2 L9.5 4.5 L6.5 7 Z" fill="#fff"/><path d="M11.5 8.5 L8.5 11 L11.5 13.5 Z" fill="#fff"/></svg>
<svg style="left:91px;top:384px;" width="11" height="14" viewBox="0 0 11 14"><rect x="0" y="0" width="1.8" height="14" fill="#e4e6e9"/><path d="M10.5 0 L2.5 7 L10.5 14 Z" fill="#e4e6e9"/></svg>
<svg style="left:123px;top:382px;" width="19" height="19" viewBox="0 0 19 19"><path d="M0.5 0 L18 9.5 L0.5 19 Z" fill="#ffffff"/></svg>
<div style="position:absolute;left:161px;top:385px;width:13px;height:13px;background:#ffffff;"></div>
<svg style="left:194px;top:383px;" width="17" height="17" viewBox="0 0 17 17"><circle cx="8.5" cy="8.5" r="7.5" fill="none" stroke="#c9ccd0" stroke-width="1"/><circle cx="8.5" cy="8.5" r="6" fill="#e8434a"/></svg>
<svg style="left:230px;top:384px;" width="15" height="15" viewBox="0 0 15 15"><rect x="6" y="0" width="3" height="4" fill="#fff" transform="rotate(0 7.5 7.5)"/><rect x="6" y="0" width="3" height="4" fill="#fff" transform="rotate(45 7.5 7.5)"/><rect x="6" y="0" width="3" height="4" fill="#fff" transform="rotate(90 7.5 7.5)"/><rect x="6" y="0" width="3" height="4" fill="#fff" transform="rotate(135 7.5 7.5)"/><rect x="6" y="0" width="3" height="4" fill="#fff" transform="rotate(180 7.5 7.5)"/><rect x="6" y="0" width="3" height="4" fill="#fff" transform="rotate(225 7.5 7.5)"/><rect x="6" y="0" width="3" height="4" fill="#fff" transform="rotate(270 7.5 7.5)"/><rect x="6" y="0" width="3" height="4" fill="#fff" transform="rotate(315 7.5 7.5)"/><circle cx="7.5" cy="7.5" r="5.3" fill="#fff"/><circle cx="7.5" cy="7.5" r="3.3" fill="#e8434a"/></svg>
<div style="position:absolute;left:275px;top:376px;font-size:15px;line-height:1;color:#f0f2f4;font-weight:normal;white-space:nowrap;">01.01.000</div>
<div style="position:absolute;left:275px;top:397px;font-size:10px;line-height:1;color:#dde0e4;font-weight:normal;white-space:nowrap;letter-spacing:-0.25px">Bar.Beats.Ticks</div>
<div style="position:absolute;left:376px;top:376px;font-size:15px;line-height:1;color:#f0f2f4;font-weight:normal;white-space:nowrap;">4/4</div>
<div style="position:absolute;left:379px;top:397px;font-size:10px;line-height:1;color:#dde0e4;font-weight:normal;white-space:nowrap;">Bar</div>
<div style="position:absolute;left:429px;top:376px;font-size:15px;line-height:1;color:#f0f2f4;font-weight:normal;white-space:nowrap;">120</div>
<div style="position:absolute;left:430px;top:397px;font-size:10px;line-height:1;color:#dde0e4;font-weight:normal;white-space:nowrap;">BPM</div>
<svg style="left:479px;top:384px;" width="12" height="15" viewBox="0 0 12 15"><path d="M4 1 L8 1 L11 14 L1 14 Z" fill="#e4e6e9"/><path d="M6 11 L1 2" stroke="#3d4147" stroke-width="1.6"/><path d="M6 11 L1.5 2.5" stroke="#e4e6e9" stroke-width="0.9"/></svg>
<svg style="left:506px;top:389px;" width="7" height="6" viewBox="0 0 7 6"><path d="M0.5 0.5 L6.5 0.5 L3.5 5.5 Z" fill="#f0f2f4"/></svg>
<div style="position:absolute;left:1314px;top:375px;width:106px;height:3px;background:#2c2f34;"></div>
<div style="position:absolute;left:1314px;top:402px;width:106px;height:3px;background:#2c2f34;"></div>
<div style="position:absolute;left:1314px;top:389px;width:106px;height:3px;background:#2c2f34;"></div>
<div style="position:absolute;left:1314px;top:389px;width:60px;height:3px;background:#4f86e6;"></div>
<div style="position:absolute;left:1373px;top:381px;width:1px;height:4px;background:#7a7d82;"></div>
<div style="position:absolute;left:1373px;top:395px;width:1px;height:4px;background:#7a7d82;"></div>
<div style="position:absolute;left:1394px;top:380px;width:2px;height:5px;background:#7a7d82;"></div>
<div style="position:absolute;left:1394px;top:395px;width:2px;height:5px;background:#7a7d82;"></div>
<svg style="left:1369px;top:386px;" width="9" height="9" viewBox="0 0 9 9"><circle cx="4.5" cy="4.5" r="4.3" fill="#fff"/></svg>
<div style="position:absolute;left:1436px;top:388px;font-size:10px;line-height:1;color:#6c6f74;font-weight:normal;white-space:nowrap;">MIDI</div>
<svg style="left:1466px;top:383px;" width="16" height="16" viewBox="0 0 16 16"><circle cx="6.5" cy="6.5" r="5.6" fill="none" stroke="#dfe2e5" stroke-width="1.4"/><path d="M10.5 10.5 L15 15" stroke="#dfe2e5" stroke-width="1.5"/></svg>
<div style="position:absolute;left:0px;top:414px;width:1500px;height:18px;background:#353940;"></div>
<div style="position:absolute;left:3px;top:420px;font-size:11px;line-height:1;color:#b3b7bd;font-weight:normal;white-space:nowrap;letter-spacing:-0.3px">Loops</div>
<svg style="left:1478px;top:422px;" width="10" height="7" viewBox="0 0 10 7"><path d="M0.5 3.5 L4 0.5 L4 2 C6.5 1.5 9 2.5 9.5 4.5 C8 3.5 6 3.3 4 4 L4 6.5 Z" fill="#dcdfe2"/><rect x="0.5" y="3.5" width="3.5" height="3" fill="#dcdfe2"/></svg>
<svg style="left:1491px;top:421px;" width="8" height="8" viewBox="0 0 8 8"><path d="M0.8 0.8 L7.2 7.2 M7.2 0.8 L0.8 7.2" stroke="#dcdfe2" stroke-width="1.3"/></svg>
<svg style="left:745px;top:415px;" width="16" height="2" viewBox="0 0 16 2"><rect x="0" y="0.5" width="1" height="1" fill="#b0b3b8"/><rect x="3" y="0.5" width="1" height="1" fill="#b0b3b8"/><rect x="5" y="0.5" width="1" height="1" fill="#b0b3b8"/><rect x="8" y="0.5" width="1" height="1" fill="#b0b3b8"/><rect x="11" y="0.5" width="1" height="1" fill="#b0b3b8"/><rect x="13" y="0.5" width="1" height="1" fill="#b0b3b8"/><rect x="15" y="0.5" width="1" height="1" fill="#b0b3b8"/></svg>
<div style="position:absolute;left:0px;top:432px;width:1500px;height:425px;background:#232629;"></div>
<div style="position:absolute;left:10px;top:443px;width:141px;height:24px;background:#2e3135;border-radius:2px"></div>
<div style="position:absolute;left:17px;top:449px;font-size:11px;line-height:1;color:#f2f4f6;font-weight:normal;white-space:nowrap;">All loops</div>
<svg style="left:136px;top:452px;" width="9" height="8" viewBox="0 0 9 8"><path d="M0.5 0.5 L8.5 0.5 L4.5 7.5 Z" fill="#c9ccd0"/></svg>
<div style="position:absolute;left:161px;top:443px;width:1274px;height:25px;background:#232629;border:2px solid #2e3337;border-radius:2px"></div>
<svg style="left:166px;top:449px;" width="11" height="11" viewBox="0 0 11 11"><circle cx="4.5" cy="4.5" r="3.4" fill="none" stroke="#b9bcc0" stroke-width="1.2"/><path d="M7 7 L10 10" stroke="#b9bcc0" stroke-width="1.3"/></svg>
<div style="position:absolute;left:182px;top:450px;font-size:11px;line-height:1;color:#b6babf;font-weight:normal;white-space:nowrap;letter-spacing:-0.3px">Search in: Loops</div>
<svg style="left:1447px;top:448px;" width="14" height="13" viewBox="0 0 14 13"><path d="M7 12 L1.8 6.8 C-0.5 4.5 1 1 4 1 C5.5 1 6.5 2 7 3 C7.5 2 8.5 1 10 1 C13 1 14.5 4.5 12.2 6.8 Z" fill="none" stroke="#c9ccd0" stroke-width="1.3"/></svg>
<svg style="left:1476px;top:448px;" width="14" height="14" viewBox="0 0 14 14"><path d="M7 0.3 L7 3.5" stroke="#c9ccd0" stroke-width="1.6" transform="rotate(0 7 7)"/><path d="M7 0.3 L7 3.5" stroke="#c9ccd0" stroke-width="1.6" transform="rotate(45 7 7)"/><path d="M7 0.3 L7 3.5" stroke="#c9ccd0" stroke-width="1.6" transform="rotate(90 7 7)"/><path d="M7 0.3 L7 3.5" stroke="#c9ccd0" stroke-width="1.6" transform="rotate(135 7 7)"/><path d="M7 0.3 L7 3.5" stroke="#c9ccd0" stroke-width="1.6" transform="rotate(180 7 7)"/><path d="M7 0.3 L7 3.5" stroke="#c9ccd0" stroke-width="1.6" transform="rotate(225 7 7)"/><path d="M7 0.3 L7 3.5" stroke="#c9ccd0" stroke-width="1.6" transform="rotate(270 7 7)"/><path d="M7 0.3 L7 3.5" stroke="#c9ccd0" stroke-width="1.6" transform="rotate(315 7 7)"/><circle cx="7" cy="7" r="3.2" fill="none" stroke="#c9ccd0" stroke-width="2.2"/></svg>
<div style="position:absolute;left:0px;top:478px;width:901px;height:1px;background:#33363b;"></div>
<div style="position:absolute;left:908px;top:478px;width:592px;height:1px;background:#33363b;"></div>
<svg style="left:9px;top:497px;" width="7" height="9" viewBox="0 0 7 9"><path d="M0.5 0.5 L6.5 4.5 L0.5 8.5 Z" fill="#9a9ea3"/></svg>
<div style="position:absolute;left:20px;top:496px;font-size:11px;line-height:1;color:#9ea2a7;font-weight:normal;white-space:nowrap;letter-spacing:-0.2px">Genres</div>
<div style="position:absolute;left:17px;top:522px;font-size:11px;line-height:1;color:#a7abb0;font-weight:normal;white-space:nowrap;letter-spacing:-0.2px">Soundpools</div>
<svg style="left:77px;top:523px;" width="9" height="10" viewBox="0 0 9 10"><rect x="0" y="0" width="3" height="1.5" fill="#c9ccd0"/><rect x="0" y="3" width="5" height="1.5" fill="#c9ccd0"/><rect x="0" y="6" width="8" height="1.5" fill="#c9ccd0"/><rect x="0" y="8.5" width="8" height="1.2" fill="#c9ccd0"/></svg>
<svg style="left:420px;top:523px;" width="8" height="10" viewBox="0 0 8 10"><path d="M0.8 2.3 L3.6 4.8 L7.2 0.6 M0.6 5.4 L4 8.6 L7.4 5.4" stroke="#c9ccd0" stroke-width="1.2" fill="none"/></svg>
<div style="position:absolute;left:457px;top:522px;font-size:11px;line-height:1;color:#a7abb0;font-weight:normal;white-space:nowrap;">Instruments</div>
<svg style="left:870px;top:523px;" width="8" height="10" viewBox="0 0 8 10"><path d="M0.8 2.3 L3.6 4.8 L7.2 0.6 M0.6 5.4 L4 8.6 L7.4 5.4" stroke="#c9ccd0" stroke-width="1.2" fill="none"/></svg>
<div style="position:absolute;left:10px;top:539.5px;width:429px;height:43px;background:#2d3035;border-radius:3px"></div>
<svg style="left:24px;top:549px;" width="21" height="24" viewBox="0 0 21 24"><path d="M6 7 L6 4.5 C6 1 15 1 15 4.5 L15 7" stroke="#8f9297" stroke-width="2.4" fill="none"/><rect x="1" y="7" width="19" height="16" rx="2.5" fill="#8f9297"/><path d="M5.5 19.5 L5.5 11 L10.5 15.5 L15.5 11 L15.5 19.5" stroke="#2d3035" stroke-width="2.6" fill="none"/></svg>
<div style="position:absolute;left:56px;top:556px;font-size:11px;line-height:1;color:#eceef0;font-weight:normal;white-space:nowrap;letter-spacing:-0.17px">Additional Soundpools</div>
<div style="position:absolute;left:10px;top:584px;width:429px;height:45px;background:#2d3035;border-radius:3px"></div>
<div style="position:absolute;left:66px;top:597px;font-size:11px;line-height:1;color:#e6e8ea;font-weight:normal;white-space:nowrap;letter-spacing:-0.22px">Dame Candela - Part 2</div>
<div style="position:absolute;left:10px;top:630px;width:429px;height:45px;background:#2d3035;border-radius:3px"></div>
<div style="position:absolute;left:66px;top:643px;font-size:11px;line-height:1;color:#e6e8ea;font-weight:normal;white-space:nowrap;letter-spacing:-0.22px">Dirty HipHop - Part 2</div>
<div style="position:absolute;left:10px;top:676px;width:429px;height:45px;background:#2d3035;border-radius:3px"></div>
<div style="position:absolute;left:66px;top:689px;font-size:11px;line-height:1;color:#e6e8ea;font-weight:normal;white-space:nowrap;letter-spacing:-0.22px">Infinity - Part 2</div>
<div style="position:absolute;left:10px;top:722px;width:429px;height:45px;background:#2d3035;border-radius:3px"></div>
<div style="position:absolute;left:66px;top:735px;font-size:11px;line-height:1;color:#e6e8ea;font-weight:normal;white-space:nowrap;letter-spacing:-0.22px">Mise-en-scene</div>
<div style="position:absolute;left:10px;top:768px;width:429px;height:45px;background:#2d3035;border-radius:3px"></div>
<div style="position:absolute;left:66px;top:781px;font-size:11px;line-height:1;color:#e6e8ea;font-weight:normal;white-space:nowrap;letter-spacing:-0.22px">Modern Score</div>
<svg style="left:10px;top:584px;" width="46" height="45" viewBox="0 0 46 45"><defs><linearGradient id="dc" x1="0" y1="0" x2="0" y2="1"><stop offset="0" stop-color="#f7961e"/><stop offset="0.55" stop-color="#f5813a"/><stop offset="1" stop-color="#f02b9c"/></linearGradient></defs>
<rect width="46" height="45" rx="2" fill="url(#dc)"/><rect x="6" y="4" width="35" height="33" fill="#4ea6ee"/>
<path d="M21 4 L41 4 L41 37 L14 37 L20 28 Z" fill="#f4c726"/><path d="M20 4 C16 10 17 22 21 30 L24 30 C21 22 21 12 24 6 Z" fill="#1c1c24"/>
<path d="M36 16 L41 12 L41 37 L34 37 Z" fill="#e84a3a"/><path d="M37 20 L41 18 L41 37 L38 37 Z" fill="#2a6ad8"/>
<path d="M26 14 L31 13 M33 13 L38 14" stroke="#1c1c24" stroke-width="1.3"/><ellipse cx="30" cy="25" rx="3.5" ry="2.5" fill="#3a9ee8"/>
<text x="2" y="25" font-size="6" font-weight="bold" fill="#fff" font-family="Liberation Sans">DAME</text><text x="2" y="31" font-size="6" font-weight="bold" fill="#fff" font-family="Liberation Sans">CANDELA</text>
<rect x="8" y="39" width="30" height="4" fill="#2a2024"/><rect x="14" y="40" width="22" height="1.5" fill="#ddd"/></svg>
<svg style="left:10px;top:630px;" width="46" height="45" viewBox="0 0 46 45"><rect width="46" height="45" fill="#15161a"/>
<rect x="1" y="1" width="26" height="15" fill="#8a2a3a"/><rect x="4" y="2" width="8" height="6" fill="#c03040"/><rect x="15" y="3" width="9" height="11" fill="#b07860"/>
<rect x="28" y="1" width="17" height="10" fill="#e8dcc0"/><ellipse cx="37" cy="9" rx="5" ry="6" fill="#4a3a34"/>
<rect x="32" y="12" width="13" height="20" fill="#1e2634"/><ellipse cx="40" cy="24" rx="4" ry="6" fill="#9a7a6a"/><rect x="40" y="15" width="5" height="2" fill="#60b0c0"/>
<rect x="1" y="16" width="16" height="17" fill="#6a9a98"/><rect x="3" y="19" width="7" height="9" fill="#c8a060"/><rect x="1" y="28" width="14" height="5" fill="#8a8a78"/>
<rect x="1" y="33" width="28" height="11" fill="#d8b830"/><path d="M1 44 L1 38 C8 35 16 34 24 36 L24 44 Z" fill="#e8e4dc"/><rect x="16" y="36" width="10" height="7" fill="#d8d8d8"/><rect x="19" y="34" width="5" height="4" fill="#4aa0c0"/>
<rect x="31" y="32" width="14" height="12" fill="#5a4a70"/><rect x="33" y="36" width="9" height="8" fill="#e0d8e8"/><rect x="36" y="37" width="4" height="6" fill="#d04060"/>
<text x="15" y="19" font-size="8" font-weight="bold" fill="#f4f4f4" font-family="Liberation Sans" letter-spacing="-.3">dirty</text><text x="19" y="26" font-size="8" font-weight="bold" fill="#f4f4f4" font-family="Liberation Sans">hip</text><text x="13" y="33" font-size="8" font-weight="bold" fill="#f4f4f4" font-family="Liberation Sans">hop</text>
<rect x="27" y="28" width="7" height="8" fill="#c02a30"/><rect x="29" y="29" width="1" height="6" fill="#eee"/><rect x="32" y="29" width="1" height="6" fill="#eee"/><rect x="18" y="40" width="14" height="3" fill="#222"/></svg>
<svg style="left:10px;top:676px;" width="46" height="45" viewBox="0 0 46 45"><defs><linearGradient id="inf" x1="0" y1="0" x2="1" y2="1"><stop offset="0" stop-color="#5b4cc8"/><stop offset="0.45" stop-color="#7a6ad8"/><stop offset="1" stop-color="#c8b8f0"/></linearGradient>
<radialGradient id="inf2" cx="0.5" cy="0.5" r="0.5"><stop offset="0" stop-color="#e8f0ff" stop-opacity=".9"/><stop offset="1" stop-color="#e8f0ff" stop-opacity="0"/></radialGradient></defs>
<rect width="46" height="45" rx="2" fill="url(#inf)"/><rect x="28" y="0" width="18" height="16" fill="#3aa0b8" opacity=".7"/><circle cx="24" cy="22" r="16" fill="url(#inf2)"/>
<path d="M23 10 L36 34 L10 34 Z" fill="none" stroke="#fff" stroke-width="1"/>
<ellipse cx="23" cy="22" rx="5" ry="6" fill="#24348a"/><path d="M12 45 C12 32 34 32 34 45 Z" fill="#2a3a8a"/>
<text x="4" y="8" font-size="6.5" font-weight="bold" fill="#fff" font-family="Liberation Sans" letter-spacing=".3">INFINITY</text><rect x="14" y="40" width="18" height="3" fill="#222"/></svg>
<svg style="left:10px;top:722px;" width="46" height="45" viewBox="0 0 46 45"><rect width="46" height="45" fill="#221e1f"/>
<text x="23" y="13" font-size="9" fill="#e8e4e0" text-anchor="middle" font-family="Liberation Serif">MISE</text><text x="23" y="21" font-size="9" fill="#e8e4e0" text-anchor="middle" font-family="Liberation Serif">EN</text><text x="23" y="29" font-size="9" fill="#e8e4e0" text-anchor="middle" font-family="Liberation Serif">SCENE</text>
<path d="M20 24 L28 16" stroke="#c87060" stroke-width=".8"/><rect x="12" y="35" width="10" height="2" fill="#ccc"/><rect x="17" y="38" width="16" height="2" fill="#aaa"/></svg>
<svg style="left:10px;top:768px;" width="46" height="45" viewBox="0 0 46 45"><defs><radialGradient id="ms" cx="0.5" cy="0.6" r="0.45"><stop offset="0" stop-color="#f0d8a0"/><stop offset=".3" stop-color="#9a7040" stop-opacity=".8"/><stop offset="1" stop-color="#101a24" stop-opacity="0"/></radialGradient></defs>
<rect width="46" height="45" rx="2" fill="#0f1820"/><rect x="0" y="0" width="46" height="12" fill="#1a2a36"/><rect width="46" height="45" fill="url(#ms)"/>
<path d="M0 17 L16 25 L0 33 M46 17 L30 25 L46 33" stroke="#c8a870" stroke-width="1.2" fill="none"/><path d="M2 22 L2 30 M6 22 L6 29 M10 23 L10 28 M44 22 L44 30 M40 22 L40 29 M36 23 L36 28" stroke="#b89a6a" stroke-width="1"/>
<path d="M12 45 L21 27 L25 27 L34 45 Z" fill="#2a2a2a" opacity=".6"/><rect x="22" y="27" width="2.5" height="12" fill="#f8d890"/><text x="23" y="12" font-size="4.5" fill="#e8e0d0" text-anchor="middle" font-family="Liberation Sans">MODERN</text><text x="23" y="17" font-size="4.5" fill="#e8e0d0" text-anchor="middle" font-family="Liberation Sans">SCORE</text><rect x="15" y="39" width="16" height="3" fill="#ccc" opacity=".7"/></svg>
<div style="position:absolute;left:10px;top:814px;width:429px;height:22px;overflow:hidden;border-radius:3px 3px 0 0;background:linear-gradient(180deg,#35393e 0%,#2f3237 60%,#26292c 100%)"><svg style="left:0;top:0" width="46" height="45" viewBox="0 0 46 45"><rect x="0" y="0" width="46" height="45" fill="#5e7a68"/><rect x="1" y="1" width="44" height="44" fill="#1e1a1c"/><path d="M6 16 C14 12 20 8 30 3" stroke="#b0242c" stroke-width="4" fill="none"/><path d="M8 20 L22 14" stroke="#901c22" stroke-width="2"/><ellipse cx="32" cy="20" rx="3" ry="6" fill="#a8a49c"/><path d="M34 16 L40 10" stroke="#e06040" stroke-width="1.2"/><circle cx="8" cy="3" r="2" fill="#6a5a58"/></svg><div style="position:absolute;left:56px;top:12px;font-size:11px;line-height:1;color:#7a7e83;white-space:nowrap;letter-spacing:-0.22px">Nostalgia Drive</div><div style="position:absolute;left:0;top:6px;width:429px;height:16px;background:linear-gradient(180deg,rgba(35,38,41,0) 0%,rgba(35,38,41,0.55) 70%,rgba(35,38,41,0.9) 100%)"></div></div>
<div style="position:absolute;left:441px;top:540px;width:7px;height:212px;background:#3b3f45;border-radius:3.5px"></div>
<div style="position:absolute;left:10px;top:843px;font-size:9.5px;line-height:1;color:#a3a7ac;font-weight:normal;white-space:nowrap;letter-spacing:-0.1px">1 Soundpool selected, 8 instruments selected, 101 Loops.</div>
<div style="position:absolute;left:450px;top:539px;width:440px;height:27px;background:#2d3035;border-radius:3px"></div>
<div style="position:absolute;left:485px;top:547px;font-size:11px;line-height:1;color:#6cbfe0;font-weight:normal;white-space:nowrap;">Bass</div>
<div style="position:absolute;left:800px;top:547px;width:76px;text-align:right;font-size:11px;line-height:1;color:#6cbfe0">8</div>
<div style="position:absolute;left:450px;top:568px;width:440px;height:27px;background:#2d3035;border-radius:3px"></div>
<div style="position:absolute;left:485px;top:576px;font-size:11px;line-height:1;color:#67d48e;font-weight:normal;white-space:nowrap;">Drums</div>
<div style="position:absolute;left:800px;top:576px;width:76px;text-align:right;font-size:11px;line-height:1;color:#67d48e">47</div>
<div style="position:absolute;left:450px;top:597px;width:440px;height:27px;background:#2d3035;border-radius:3px"></div>
<div style="position:absolute;left:485px;top:605px;font-size:11px;line-height:1;color:#70d27e;font-weight:normal;white-space:nowrap;">Fx</div>
<div style="position:absolute;left:800px;top:605px;width:76px;text-align:right;font-size:11px;line-height:1;color:#70d27e">13</div>
<div style="position:absolute;left:450px;top:626px;width:440px;height:27px;background:#2d3035;border-radius:3px"></div>
<div style="position:absolute;left:485px;top:634px;font-size:11px;line-height:1;color:#7fd46a;font-weight:normal;white-space:nowrap;">Guitar</div>
<div style="position:absolute;left:800px;top:634px;width:76px;text-align:right;font-size:11px;line-height:1;color:#7fd46a">4</div>
<div style="position:absolute;left:450px;top:655px;width:440px;height:27px;background:#2d3035;border-radius:3px"></div>
<div style="position:absolute;left:485px;top:663px;font-size:11px;line-height:1;color:#d3d86e;font-weight:normal;white-space:nowrap;">Keys</div>
<div style="position:absolute;left:800px;top:663px;width:76px;text-align:right;font-size:11px;line-height:1;color:#d3d86e">6</div>
<div style="position:absolute;left:450px;top:684px;width:440px;height:27px;background:#2d3035;border-radius:3px"></div>
<div style="position:absolute;left:485px;top:692px;font-size:11px;line-height:1;color:#e6806c;font-weight:normal;white-space:nowrap;">Pads</div>
<div style="position:absolute;left:800px;top:692px;width:76px;text-align:right;font-size:11px;line-height:1;color:#e6806c">8</div>
<div style="position:absolute;left:450px;top:713px;width:440px;height:27px;background:#2d3035;border-radius:3px"></div>
<div style="position:absolute;left:485px;top:721px;font-size:11px;line-height:1;color:#e879a6;font-weight:normal;white-space:nowrap;">Sequences</div>
<div style="position:absolute;left:800px;top:721px;width:76px;text-align:right;font-size:11px;line-height:1;color:#e879a6">5</div>
<div style="position:absolute;left:450px;top:742px;width:440px;height:27px;background:#2d3035;border-radius:3px"></div>
<div style="position:absolute;left:485px;top:750px;font-size:11px;line-height:1;color:#c77be6;font-weight:normal;white-space:nowrap;">Synth</div>
<div style="position:absolute;left:800px;top:750px;width:76px;text-align:right;font-size:11px;line-height:1;color:#c77be6">10</div>
<svg style="left:460px;top:545px;" width="14" height="16" viewBox="0 0 14 16"><path d="M0.3 14 L3 10.2 L6.5 6.6 L10 3.2 L11.6 1.3 C12.6 0.8 13.6 1.6 13.4 3 L12.6 4.6 L10.2 7.6 L8.3 11 L5.2 13.2 L1.6 14.3 Z" fill="#6cbfe0"/><circle cx="1.5" cy="7.2" r="1.05" fill="#6cbfe0"/><circle cx="3.8" cy="5" r="1.05" fill="#6cbfe0"/><circle cx="6" cy="2.8" r="1.05" fill="#6cbfe0"/><circle cx="8.3" cy="0.8" r="1.05" fill="#6cbfe0"/></svg>
<svg style="left:460px;top:574px;" width="16" height="15" viewBox="0 0 16 15"><rect x="3.5" y="0.5" width="3.5" height="1.5" fill="#67d48e"/><rect x="9" y="0.5" width="3.5" height="1.5" fill="#67d48e"/><rect x="0" y="3" width="4" height="4" fill="#67d48e"/><rect x="12" y="3" width="4" height="4" fill="#67d48e"/><circle cx="8" cy="8" r="5" fill="none" stroke="#67d48e" stroke-width="2"/><path d="M4 14.5 L5 12 M12 14.5 L11 12" stroke="#67d48e" stroke-width="1.3"/></svg>
<svg style="left:460px;top:603px;" width="15" height="15" viewBox="0 0 15 15"><polygon points="7.5,0.0 9.1,3.6 12.8,2.2 11.4,5.9 15.0,7.5 11.4,9.1 12.8,12.8 9.1,11.4 7.5,15.0 5.9,11.4 2.2,12.8 3.6,9.1 0.0,7.5 3.6,5.9 2.2,2.2 5.9,3.6" fill="none" stroke="#70d27e" stroke-width="1.2"/><circle cx="7.5" cy="7.5" r="2.8" fill="#70d27e"/></svg>
<svg style="left:460px;top:632px;" width="16" height="16" viewBox="0 0 16 16"><circle cx="4.5" cy="11.5" r="4" fill="#7fd46a"/><circle cx="7" cy="9" r="3" fill="#7fd46a"/><path d="M6.5 9.5 L14.5 1.5" stroke="#7fd46a" stroke-width="1.6"/><circle cx="4.5" cy="11.5" r="1" fill="#2d3035"/></svg>
<svg style="left:460px;top:661px;" width="16" height="16" viewBox="0 0 16 16"><circle cx="8" cy="8" r="7" fill="none" stroke="#d3d86e" stroke-width="1.6"/><circle cx="8" cy="8" r="4.3" fill="#d3d86e"/><circle cx="7" cy="7" r="2" fill="#2d3035"/></svg>
<svg style="left:460px;top:690px;" width="15" height="16" viewBox="0 0 15 16"><rect x="1" y="1" width="13" height="14" fill="#e6806c"/><rect x="2" y="2" width="11" height="3" fill="#2d3035"/><rect x="2.5" y="2.8" width="1.3" height="1.3" fill="#e6806c"/><rect x="5.0" y="2.8" width="1.3" height="1.3" fill="#e6806c"/><rect x="7.5" y="2.8" width="1.3" height="1.3" fill="#e6806c"/><rect x="10.0" y="2.8" width="1.3" height="1.3" fill="#e6806c"/><rect x="3.8" y="6" width="0.9" height="9" fill="#2d3035"/><rect x="6.8" y="6" width="0.9" height="9" fill="#2d3035"/><rect x="9.8" y="6" width="0.9" height="9" fill="#2d3035"/></svg>
<svg style="left:460px;top:719px;" width="15" height="16" viewBox="0 0 15 16"><rect x="1" y="1" width="13" height="14" fill="#e879a6"/><rect x="2" y="2" width="11" height="3" fill="#2d3035"/><rect x="2.5" y="2.8" width="1.3" height="1.3" fill="#e879a6"/><rect x="5.0" y="2.8" width="1.3" height="1.3" fill="#e879a6"/><rect x="7.5" y="2.8" width="1.3" height="1.3" fill="#e879a6"/><rect x="10.0" y="2.8" width="1.3" height="1.3" fill="#e879a6"/><rect x="3.8" y="6" width="0.9" height="9" fill="#2d3035"/><rect x="6.8" y="6" width="0.9" height="9" fill="#2d3035"/><rect x="9.8" y="6" width="0.9" height="9" fill="#2d3035"/></svg>
<svg style="left:460px;top:748px;" width="15" height="16" viewBox="0 0 15 16"><rect x="1" y="1" width="13" height="14" fill="#c77be6"/><rect x="2" y="2" width="11" height="3" fill="#2d3035"/><rect x="2.5" y="2.8" width="1.3" height="1.3" fill="#c77be6"/><rect x="5.0" y="2.8" width="1.3" height="1.3" fill="#c77be6"/><rect x="7.5" y="2.8" width="1.3" height="1.3" fill="#c77be6"/><rect x="10.0" y="2.8" width="1.3" height="1.3" fill="#c77be6"/><rect x="3.8" y="6" width="0.9" height="9" fill="#2d3035"/><rect x="6.8" y="6" width="0.9" height="9" fill="#2d3035"/><rect x="9.8" y="6" width="0.9" height="9" fill="#2d3035"/></svg>
<div style="position:absolute;left:901px;top:479px;width:7px;height:377px;background:#33363b;"></div>
<svg style="left:903px;top:660px;" width="3" height="16" viewBox="0 0 3 16"><rect x="0" y="0" width="1" height="1" fill="#6e7277"/><rect x="0" y="2" width="1" height="1" fill="#6e7277"/><rect x="0" y="4" width="1" height="1" fill="#6e7277"/><rect x="0" y="6" width="1" height="1" fill="#6e7277"/><rect x="0" y="8" width="1" height="1" fill="#6e7277"/><rect x="0" y="10" width="1" height="1" fill="#6e7277"/><rect x="0" y="12" width="1" height="1" fill="#6e7277"/><rect x="0" y="14" width="1" height="1" fill="#6e7277"/><rect x="2" y="0" width="1" height="1" fill="#6e7277"/><rect x="2" y="2" width="1" height="1" fill="#6e7277"/><rect x="2" y="4" width="1" height="1" fill="#6e7277"/><rect x="2" y="6" width="1" height="1" fill="#6e7277"/><rect x="2" y="8" width="1" height="1" fill="#6e7277"/><rect x="2" y="10" width="1" height="1" fill="#6e7277"/><rect x="2" y="12" width="1" height="1" fill="#6e7277"/><rect x="2" y="14" width="1" height="1" fill="#6e7277"/></svg>
<div style="position:absolute;left:908px;top:479px;width:592px;height:377px;background:#1f2225;"></div>
<div style="position:absolute;left:919px;top:484px;font-size:11px;line-height:1;color:#9ea2a7;font-weight:normal;white-space:nowrap;">Pitch</div>
<div style="position:absolute;left:987px;top:484px;font-size:11px;line-height:1;color:#9ea2a7;font-weight:normal;white-space:nowrap;">Loop name</div>
<div style="position:absolute;left:1156px;top:484px;font-size:11px;line-height:1;color:#9ea2a7;font-weight:normal;white-space:nowrap;">Preview</div>
<div style="position:absolute;left:1301px;top:484px;font-size:11px;line-height:1;color:#9ea2a7;font-weight:normal;white-space:nowrap;">BPM</div>
<div style="position:absolute;left:1343px;top:484px;font-size:11px;line-height:1;color:#9ea2a7;font-weight:normal;white-space:nowrap;">Length</div>
<div style="position:absolute;left:1400px;top:484px;font-size:11px;line-height:1;color:#9ea2a7;font-weight:normal;white-space:nowrap;">Harmony</div>
<svg style="left:1472px;top:484px;" width="10" height="9" viewBox="0 0 10 9"><path d="M5 8.5 L1 4.5 C-0.5 3 0.3 0.3 2.6 0.3 C3.8 0.3 4.5 1 5 1.8 C5.5 1 6.2 0.3 7.4 0.3 C9.7 0.3 10.5 3 9 4.5 Z" fill="#b9bcc0"/></svg>
<div style="position:absolute;left:952px;top:500px;width:539px;height:356px;background:#222528;"></div>
<div style="position:absolute;left:952px;top:500.5px;width:539px;height:28.5px;background:#2f5260;border:1px solid #68bcd8"></div>
<div style="position:absolute;left:987px;top:509.5px;font-size:11px;line-height:1;color:#70c3e2;font-weight:normal;white-space:nowrap;letter-spacing:-0.37px">Don't Hate Bass A</div>
<div style="position:absolute;left:1301px;top:509.5px;font-size:11px;line-height:1;color:#70c3e2;font-weight:normal;white-space:nowrap;">172</div>
<div style="position:absolute;left:1343px;top:509.5px;font-size:11px;line-height:1;color:#70c3e2;font-weight:normal;white-space:nowrap;letter-spacing:-0.35px">8 Bars</div>
<div style="position:absolute;left:1400px;top:509.5px;font-size:11px;line-height:1;color:#70c3e2;font-weight:normal;white-space:nowrap;">a-Minor</div>
<svg style="left:1472px;top:510.5px;" width="10" height="9" viewBox="0 0 10 9"><path d="M5 8.3 L1.3 4.6 C-0.3 3 0.5 0.6 2.7 0.6 C3.8 0.6 4.5 1.2 5 2 C5.5 1.2 6.2 0.6 7.3 0.6 C9.5 0.6 10.3 3 8.7 4.6 Z" fill="none" stroke="#70c3e2" stroke-width="1.1"/></svg>
<div style="position:absolute;left:952px;top:530.0px;width:539px;height:28px;background:#2b2e32;"></div>
<div style="position:absolute;left:987px;top:538.5px;font-size:11px;line-height:1;color:#70c3e2;font-weight:normal;white-space:nowrap;letter-spacing:-0.37px">Don't Hate Bass B</div>
<div style="position:absolute;left:1301px;top:538.5px;font-size:11px;line-height:1;color:#70c3e2;font-weight:normal;white-space:nowrap;">172</div>
<div style="position:absolute;left:1343px;top:538.5px;font-size:11px;line-height:1;color:#70c3e2;font-weight:normal;white-space:nowrap;letter-spacing:-0.35px">8 Bars</div>
<div style="position:absolute;left:1400px;top:538.5px;font-size:11px;line-height:1;color:#70c3e2;font-weight:normal;white-space:nowrap;">a-Minor</div>
<svg style="left:1472px;top:539.5px;" width="10" height="9" viewBox="0 0 10 9"><path d="M5 8.3 L1.3 4.6 C-0.3 3 0.5 0.6 2.7 0.6 C3.8 0.6 4.5 1.2 5 2 C5.5 1.2 6.2 0.6 7.3 0.6 C9.5 0.6 10.3 3 8.7 4.6 Z" fill="none" stroke="#70c3e2" stroke-width="1.1"/></svg>
<div style="position:absolute;left:952px;top:559.0px;width:539px;height:28px;background:#2b2e32;"></div>
<div style="position:absolute;left:987px;top:567.5px;font-size:11px;line-height:1;color:#70c3e2;font-weight:normal;white-space:nowrap;letter-spacing:-0.37px">Saturday Bright Lights Bass A</div>
<div style="position:absolute;left:1301px;top:567.5px;font-size:11px;line-height:1;color:#70c3e2;font-weight:normal;white-space:nowrap;">172</div>
<div style="position:absolute;left:1343px;top:567.5px;font-size:11px;line-height:1;color:#70c3e2;font-weight:normal;white-space:nowrap;letter-spacing:-0.35px">8 Bars</div>
<div style="position:absolute;left:1400px;top:567.5px;font-size:11px;line-height:1;color:#70c3e2;font-weight:normal;white-space:nowrap;">a-Minor</div>
<svg style="left:1472px;top:568.5px;" width="10" height="9" viewBox="0 0 10 9"><path d="M5 8.3 L1.3 4.6 C-0.3 3 0.5 0.6 2.7 0.6 C3.8 0.6 4.5 1.2 5 2 C5.5 1.2 6.2 0.6 7.3 0.6 C9.5 0.6 10.3 3 8.7 4.6 Z" fill="none" stroke="#70c3e2" stroke-width="1.1"/></svg>
<div style="position:absolute;left:952px;top:588.0px;width:539px;height:28px;background:#2b2e32;"></div>
<div style="position:absolute;left:987px;top:596.5px;font-size:11px;line-height:1;color:#70c3e2;font-weight:normal;white-space:nowrap;letter-spacing:-0.37px">Saturday Bright Lights Bass B</div>
<div style="position:absolute;left:1301px;top:596.5px;font-size:11px;line-height:1;color:#70c3e2;font-weight:normal;white-space:nowrap;">172</div>
<div style="position:absolute;left:1343px;top:596.5px;font-size:11px;line-height:1;color:#70c3e2;font-weight:normal;white-space:nowrap;letter-spacing:-0.35px">8 Bars</div>
<div style="position:absolute;left:1400px;top:596.5px;font-size:11px;line-height:1;color:#70c3e2;font-weight:normal;white-space:nowrap;">a-Minor</div>
<svg style="left:1472px;top:597.5px;" width="10" height="9" viewBox="0 0 10 9"><path d="M5 8.3 L1.3 4.6 C-0.3 3 0.5 0.6 2.7 0.6 C3.8 0.6 4.5 1.2 5 2 C5.5 1.2 6.2 0.6 7.3 0.6 C9.5 0.6 10.3 3 8.7 4.6 Z" fill="none" stroke="#70c3e2" stroke-width="1.1"/></svg>
<div style="position:absolute;left:952px;top:617.0px;width:539px;height:28px;background:#2b2e32;"></div>
<div style="position:absolute;left:987px;top:625.5px;font-size:11px;line-height:1;color:#70c3e2;font-weight:normal;white-space:nowrap;letter-spacing:-0.37px">Sunday Bright Lights Bass A</div>
<div style="position:absolute;left:1301px;top:625.5px;font-size:11px;line-height:1;color:#70c3e2;font-weight:normal;white-space:nowrap;">172</div>
<div style="position:absolute;left:1343px;top:625.5px;font-size:11px;line-height:1;color:#70c3e2;font-weight:normal;white-space:nowrap;letter-spacing:-0.35px">4 Bars</div>
<div style="position:absolute;left:1400px;top:625.5px;font-size:11px;line-height:1;color:#70c3e2;font-weight:normal;white-space:nowrap;">a-Minor</div>
<svg style="left:1472px;top:626.5px;" width="10" height="9" viewBox="0 0 10 9"><path d="M5 8.3 L1.3 4.6 C-0.3 3 0.5 0.6 2.7 0.6 C3.8 0.6 4.5 1.2 5 2 C5.5 1.2 6.2 0.6 7.3 0.6 C9.5 0.6 10.3 3 8.7 4.6 Z" fill="none" stroke="#70c3e2" stroke-width="1.1"/></svg>
<div style="position:absolute;left:952px;top:646.0px;width:539px;height:28px;background:#2b2e32;"></div>
<div style="position:absolute;left:987px;top:654.5px;font-size:11px;line-height:1;color:#70c3e2;font-weight:normal;white-space:nowrap;letter-spacing:-0.37px">Sunday Bright Lights Bass B</div>
<div style="position:absolute;left:1301px;top:654.5px;font-size:11px;line-height:1;color:#70c3e2;font-weight:normal;white-space:nowrap;">172</div>
<div style="position:absolute;left:1343px;top:654.5px;font-size:11px;line-height:1;color:#70c3e2;font-weight:normal;white-space:nowrap;letter-spacing:-0.35px">4 Bars</div>
<div style="position:absolute;left:1400px;top:654.5px;font-size:11px;line-height:1;color:#70c3e2;font-weight:normal;white-space:nowrap;">a-Minor</div>
<svg style="left:1472px;top:655.5px;" width="10" height="9" viewBox="0 0 10 9"><path d="M5 8.3 L1.3 4.6 C-0.3 3 0.5 0.6 2.7 0.6 C3.8 0.6 4.5 1.2 5 2 C5.5 1.2 6.2 0.6 7.3 0.6 C9.5 0.6 10.3 3 8.7 4.6 Z" fill="none" stroke="#70c3e2" stroke-width="1.1"/></svg>
<div style="position:absolute;left:952px;top:675.0px;width:539px;height:28px;background:#2b2e32;"></div>
<div style="position:absolute;left:987px;top:683.5px;font-size:11px;line-height:1;color:#70c3e2;font-weight:normal;white-space:nowrap;letter-spacing:-0.37px">Xavier my Dear Bass A</div>
<div style="position:absolute;left:1301px;top:683.5px;font-size:11px;line-height:1;color:#70c3e2;font-weight:normal;white-space:nowrap;">172</div>
<div style="position:absolute;left:1343px;top:683.5px;font-size:11px;line-height:1;color:#70c3e2;font-weight:normal;white-space:nowrap;letter-spacing:-0.35px">8 Bars</div>
<div style="position:absolute;left:1400px;top:683.5px;font-size:11px;line-height:1;color:#70c3e2;font-weight:normal;white-space:nowrap;">a-Minor</div>
<svg style="left:1472px;top:684.5px;" width="10" height="9" viewBox="0 0 10 9"><path d="M5 8.3 L1.3 4.6 C-0.3 3 0.5 0.6 2.7 0.6 C3.8 0.6 4.5 1.2 5 2 C5.5 1.2 6.2 0.6 7.3 0.6 C9.5 0.6 10.3 3 8.7 4.6 Z" fill="none" stroke="#70c3e2" stroke-width="1.1"/></svg>
<div style="position:absolute;left:952px;top:704.0px;width:539px;height:28px;background:#363a40;"></div>
<div style="position:absolute;left:987px;top:712.5px;font-size:11px;line-height:1;color:#70c3e2;font-weight:normal;white-space:nowrap;letter-spacing:-0.37px">Xavier my Dear Bass B</div>
<div style="position:absolute;left:1301px;top:712.5px;font-size:11px;line-height:1;color:#70c3e2;font-weight:normal;white-space:nowrap;">172</div>
<div style="position:absolute;left:1343px;top:712.5px;font-size:11px;line-height:1;color:#70c3e2;font-weight:normal;white-space:nowrap;letter-spacing:-0.35px">8 Bars</div>
<div style="position:absolute;left:1400px;top:712.5px;font-size:11px;line-height:1;color:#70c3e2;font-weight:normal;white-space:nowrap;">a-Minor</div>
<svg style="left:1472px;top:713.5px;" width="10" height="9" viewBox="0 0 10 9"><path d="M5 8.3 L1.3 4.6 C-0.3 3 0.5 0.6 2.7 0.6 C3.8 0.6 4.5 1.2 5 2 C5.5 1.2 6.2 0.6 7.3 0.6 C9.5 0.6 10.3 3 8.7 4.6 Z" fill="none" stroke="#70c3e2" stroke-width="1.1"/></svg>
<div style="position:absolute;left:952px;top:733.0px;width:539px;height:28px;background:#2b2e32;"></div>
<div style="position:absolute;left:987px;top:741.5px;font-size:11px;line-height:1;color:#6fd894;font-weight:normal;white-space:nowrap;letter-spacing:-0.37px">Don't Hate Drums A</div>
<div style="position:absolute;left:1301px;top:741.5px;font-size:11px;line-height:1;color:#6fd894;font-weight:normal;white-space:nowrap;">172</div>
<div style="position:absolute;left:1343px;top:741.5px;font-size:11px;line-height:1;color:#6fd894;font-weight:normal;white-space:nowrap;letter-spacing:-0.35px">8 Bars</div>
<svg style="left:1472px;top:742.5px;" width="10" height="9" viewBox="0 0 10 9"><path d="M5 8.3 L1.3 4.6 C-0.3 3 0.5 0.6 2.7 0.6 C3.8 0.6 4.5 1.2 5 2 C5.5 1.2 6.2 0.6 7.3 0.6 C9.5 0.6 10.3 3 8.7 4.6 Z" fill="none" stroke="#6fd894" stroke-width="1.1"/></svg>
<div style="position:absolute;left:952px;top:762.0px;width:539px;height:28px;background:#2b2e32;"></div>
<div style="position:absolute;left:987px;top:770.5px;font-size:11px;line-height:1;color:#6fd894;font-weight:normal;white-space:nowrap;letter-spacing:-0.37px">Don't Hate Drums B</div>
<div style="position:absolute;left:1301px;top:770.5px;font-size:11px;line-height:1;color:#6fd894;font-weight:normal;white-space:nowrap;">172</div>
<div style="position:absolute;left:1343px;top:770.5px;font-size:11px;line-height:1;color:#6fd894;font-weight:normal;white-space:nowrap;letter-spacing:-0.35px">8 Bars</div>
<svg style="left:1472px;top:771.5px;" width="10" height="9" viewBox="0 0 10 9"><path d="M5 8.3 L1.3 4.6 C-0.3 3 0.5 0.6 2.7 0.6 C3.8 0.6 4.5 1.2 5 2 C5.5 1.2 6.2 0.6 7.3 0.6 C9.5 0.6 10.3 3 8.7 4.6 Z" fill="none" stroke="#6fd894" stroke-width="1.1"/></svg>
<div style="position:absolute;left:952px;top:791.0px;width:539px;height:28px;background:#2b2e32;"></div>
<div style="position:absolute;left:987px;top:799.5px;font-size:11px;line-height:1;color:#6fd894;font-weight:normal;white-space:nowrap;letter-spacing:-0.37px">Don't Hate Drums C</div>
<div style="position:absolute;left:1301px;top:799.5px;font-size:11px;line-height:1;color:#6fd894;font-weight:normal;white-space:nowrap;">172</div>
<div style="position:absolute;left:1343px;top:799.5px;font-size:11px;line-height:1;color:#6fd894;font-weight:normal;white-space:nowrap;letter-spacing:-0.35px">8 Bars</div>
<svg style="left:1472px;top:800.5px;" width="10" height="9" viewBox="0 0 10 9"><path d="M5 8.3 L1.3 4.6 C-0.3 3 0.5 0.6 2.7 0.6 C3.8 0.6 4.5 1.2 5 2 C5.5 1.2 6.2 0.6 7.3 0.6 C9.5 0.6 10.3 3 8.7 4.6 Z" fill="none" stroke="#6fd894" stroke-width="1.1"/></svg>
<div style="position:absolute;left:952px;top:820.0px;width:539px;height:28px;background:#2b2e32;"></div>
<div style="position:absolute;left:987px;top:828.5px;font-size:11px;line-height:1;color:#6fd894;font-weight:normal;white-space:nowrap;letter-spacing:-0.37px">Don't Hate Drums D</div>
<div style="position:absolute;left:1301px;top:828.5px;font-size:11px;line-height:1;color:#6fd894;font-weight:normal;white-space:nowrap;">172</div>
<div style="position:absolute;left:1343px;top:828.5px;font-size:11px;line-height:1;color:#6fd894;font-weight:normal;white-space:nowrap;letter-spacing:-0.35px">8 Bars</div>
<svg style="left:1472px;top:829.5px;" width="10" height="9" viewBox="0 0 10 9"><path d="M5 8.3 L1.3 4.6 C-0.3 3 0.5 0.6 2.7 0.6 C3.8 0.6 4.5 1.2 5 2 C5.5 1.2 6.2 0.6 7.3 0.6 C9.5 0.6 10.3 3 8.7 4.6 Z" fill="none" stroke="#6fd894" stroke-width="1.1"/></svg>
<div style="position:absolute;left:952px;top:848.5px;width:539px;height:8px;background:#2b2e32;"></div>
<svg style="left:1152px;top:500.5px;" width="139" height="29" viewBox="0 0 139 29"><path d="M0.5 7.0v15.0M1.5 4.3v20.4M2.5 4.4v20.3M3.5 4.7v19.6M4.5 4.6v19.9M5.5 4.6v19.8M6.5 4.4v20.1M7.5 4.3v20.3M8.5 4.8v19.3M9.5 7.0v15.0M10.5 13.7v1.6M11.5 13.7v1.6M12.5 13.7v1.6M13.5 13.7v1.6M14.5 7.0v15.0M15.5 4.6v19.8M16.5 4.4v20.3M17.5 4.9v19.2M18.5 4.6v19.8M19.5 4.4v20.2M20.5 4.7v19.5M21.5 4.2v20.5M22.5 4.3v20.5M23.5 7.0v15.0M24.5 5.0v19.0M25.5 11.2v6.6M26.5 5.4v18.1M27.5 10.3v8.5M28.5 5.4v18.3M29.5 11.7v5.5M30.5 13.7v1.6M31.5 13.7v1.6M32.5 13.7v1.6M33.5 13.7v1.6M34.5 13.7v1.6M35.5 7.0v15.0M36.5 4.7v19.5M37.5 4.6v19.8M38.5 4.6v19.9M39.5 4.7v19.5M40.5 4.7v19.5M41.5 4.7v19.5M42.5 4.6v19.8M43.5 4.7v19.6M44.5 7.0v15.0M45.5 13.7v1.6M46.5 13.7v1.6M47.5 13.7v1.6M48.5 7.0v15.0M49.5 4.5v20.0M50.5 4.5v20.1M51.5 4.8v19.5M52.5 4.2v20.6M53.5 4.3v20.4M54.5 4.8v19.4M55.5 4.7v19.7M56.5 4.4v20.2M57.5 7.0v15.0M58.5 13.7v1.6M59.5 13.7v1.6M60.5 4.4v20.1M61.5 11.2v6.5M62.5 5.5v18.0M63.5 10.1v8.8M64.5 5.3v18.4M65.5 11.6v5.7M66.5 13.7v1.6M67.5 13.7v1.6M68.5 13.7v1.6M69.5 13.7v1.6M70.5 7.0v15.0M71.5 4.3v20.4M72.5 4.5v19.9M73.5 4.5v20.0M74.5 4.9v19.2M75.5 4.7v19.5M76.5 4.3v20.3M77.5 4.6v19.8M78.5 4.8v19.4M79.5 7.0v15.0M80.5 13.7v1.6M81.5 13.7v1.6M82.5 13.7v1.6M83.5 7.0v15.0M84.5 4.4v20.1M85.5 4.6v19.7M86.5 4.6v19.8M87.5 4.5v19.9M88.5 4.4v20.3M89.5 4.5v19.9M90.5 4.6v19.8M91.5 4.6v19.9M92.5 7.0v15.0M93.5 13.7v1.6M94.5 5.0v19.1M95.5 11.1v6.8M96.5 5.4v18.2M97.5 10.1v8.7M98.5 5.3v18.5M99.5 11.9v5.2M100.5 13.7v1.6M101.5 13.7v1.6M102.5 13.7v1.6M103.5 13.7v1.6M104.5 7.0v15.0M105.5 4.2v20.6M106.5 4.4v20.3M107.5 4.5v20.0M108.5 4.3v20.4M109.5 4.7v19.5M110.5 4.5v19.9M111.5 4.2v20.5M112.5 4.5v20.0M113.5 7.0v15.0M114.5 13.7v1.6M115.5 13.7v1.6M116.5 13.7v1.6M117.5 7.0v15.0M118.5 4.5v20.0M119.5 4.2v20.5M120.5 4.9v19.2M121.5 4.4v20.3M122.5 4.3v20.3M123.5 4.3v20.4M124.5 4.4v20.2M125.5 4.3v20.3M126.5 7.0v15.0M127.5 13.7v1.6M128.5 4.7v19.7M129.5 11.2v6.5M130.5 6.0v17.1M131.5 10.0v9.0M132.5 5.2v18.7M133.5 11.9v5.2M134.5 6.2v16.6M135.5 11.2v6.6M136.5 5.3v18.4M137.5 10.3v8.4M138.5 7.2v14.6" stroke="#6dbbd6" stroke-width="1"/></svg>
<svg style="left:1152px;top:529.5px;" width="139" height="29" viewBox="0 0 139 29"><path d="M0.5 8.5v12.0M1.5 4.0v20.9M2.5 4.3v20.4M3.5 4.4v20.2M4.5 4.9v19.3M5.5 5.1v18.8M6.5 5.1v18.7M7.5 5.4v18.2M8.5 5.7v17.5M9.5 5.8v17.4M10.5 13.7v1.6M11.5 13.7v1.6M12.5 13.7v1.6M13.5 13.7v1.6M14.5 8.5v12.0M15.5 4.1v20.8M16.5 4.6v19.8M17.5 4.8v19.5M18.5 4.7v19.6M19.5 5.1v18.7M20.5 5.4v18.2M21.5 5.4v18.2M22.5 5.7v17.6M23.5 6.1v16.8M24.5 4.7v19.7M25.5 11.1v6.8M26.5 5.9v17.2M27.5 10.1v8.8M28.5 5.4v18.1M29.5 11.8v5.4M30.5 13.7v1.6M31.5 13.7v1.6M32.5 13.7v1.6M33.5 13.7v1.6M34.5 13.7v1.6M35.5 8.5v12.0M36.5 4.3v20.3M37.5 4.2v20.5M38.5 4.7v19.6M39.5 4.7v19.7M40.5 5.1v18.8M41.5 5.3v18.5M42.5 5.4v18.2M43.5 5.7v17.7M44.5 6.1v16.8M45.5 13.7v1.6M46.5 13.7v1.6M47.5 13.7v1.6M48.5 8.5v12.0M49.5 4.2v20.7M50.5 4.6v19.9M51.5 4.8v19.4M52.5 4.7v19.6M53.5 5.1v18.8M54.5 5.4v18.1M55.5 5.5v17.9M56.5 5.9v17.3M57.5 5.8v17.3M58.5 13.7v1.6M59.5 13.7v1.6M60.5 4.7v19.6M61.5 11.4v6.1M62.5 5.5v18.0M63.5 10.4v8.1M64.5 5.3v18.3M65.5 12.0v5.0M66.5 13.7v1.6M67.5 13.7v1.6M68.5 13.7v1.6M69.5 13.7v1.6M70.5 8.5v12.0M71.5 4.4v20.3M72.5 4.4v20.2M73.5 4.8v19.4M74.5 4.9v19.2M75.5 5.0v19.0M76.5 5.3v18.4M77.5 5.5v17.9M78.5 5.8v17.5M79.5 6.0v17.0M80.5 13.7v1.6M81.5 13.7v1.6M82.5 13.7v1.6M83.5 8.5v12.0M84.5 4.4v20.3M85.5 4.4v20.1M86.5 4.8v19.5M87.5 4.7v19.6M88.5 4.9v19.2M89.5 5.5v18.0M90.5 5.7v17.7M91.5 5.7v17.7M92.5 5.9v17.1M93.5 13.7v1.6M94.5 5.0v19.0M95.5 11.1v6.8M96.5 5.4v18.1M97.5 10.2v8.5M98.5 5.3v18.4M99.5 11.7v5.7M100.5 13.7v1.6M101.5 13.7v1.6M102.5 13.7v1.6M103.5 13.7v1.6M104.5 8.5v12.0M105.5 4.3v20.4M106.5 4.5v20.0M107.5 4.8v19.5M108.5 4.8v19.4M109.5 5.1v18.8M110.5 5.4v18.2M111.5 5.6v17.9M112.5 5.9v17.1M113.5 6.0v16.9M114.5 13.7v1.6M115.5 13.7v1.6M116.5 13.7v1.6M117.5 8.5v12.0M118.5 4.1v20.8M119.5 4.4v20.1M120.5 4.4v20.2M121.5 4.8v19.3M122.5 5.1v18.8M123.5 5.4v18.2M124.5 5.6v17.8M125.5 5.8v17.4M126.5 6.0v17.0M127.5 13.7v1.6M128.5 4.5v20.0M129.5 11.3v6.3M130.5 5.9v17.3M131.5 10.1v8.7M132.5 4.9v19.1M133.5 11.8v5.3M134.5 6.0v16.9M135.5 11.3v6.4M136.5 5.2v18.7M137.5 10.1v8.7M138.5 6.9v15.1" stroke="#6dbbd6" stroke-width="1"/></svg>
<svg style="left:1152px;top:558.5px;" width="139" height="29" viewBox="0 0 139 29"><path d="M0.5 5.5v18.1M1.5 5.1v18.9M2.5 6.2v16.6M3.5 5.9v17.3M4.5 5.2v18.5M5.5 5.1v18.8M6.5 6.2v16.6M7.5 4.6v19.9M8.5 5.2v18.6M9.5 5.3v18.3M10.5 4.0v21.0M11.5 5.0v18.9M12.5 6.0v17.1M13.5 5.9v17.3M14.5 5.4v18.2M15.5 6.2v16.7M16.5 5.9v17.2M17.5 5.1v18.8M18.5 5.6v17.8M19.5 5.4v18.2M20.5 5.0v19.0M21.5 4.0v20.9M22.5 5.3v18.4M23.5 5.6v17.9M24.5 5.9v17.2M25.5 5.2v18.5M26.5 5.8v17.3M27.5 6.1v16.9M28.5 5.6v17.7M29.5 6.1v16.8M30.5 5.7v17.7M31.5 4.9v19.3M32.5 5.9v17.3M33.5 6.0v17.1M34.5 5.4v18.2M35.5 5.7v17.6M36.5 5.5v17.9M37.5 6.0v17.0M38.5 5.6v17.8M39.5 4.4v20.2M40.5 6.2v16.5M41.5 5.9v17.2M42.5 6.2v16.7M43.5 5.8v17.5M44.5 6.3v16.4M45.5 5.2v18.6M46.5 5.5v18.0M47.5 6.1v16.9M48.5 5.9v17.3M49.5 5.2v18.7M50.5 5.0v19.0M51.5 5.2v18.6M52.5 6.1v16.8M53.5 5.2v18.5M54.5 5.5v17.9M55.5 6.3v16.5M56.5 5.9v17.2M57.5 5.2v18.6M58.5 5.9v17.2M59.5 5.2v18.5M60.5 5.4v18.3M61.5 5.4v18.2M62.5 6.1v16.7M63.5 4.5v20.0M64.5 5.7v17.5M65.5 6.1v16.7M66.5 6.2v16.6M67.5 6.1v16.8M68.5 4.4v20.2M69.5 5.1v18.8M70.5 5.5v17.9M71.5 5.2v18.6M72.5 6.0v17.0M73.5 6.0v16.9M74.5 5.6v17.8M75.5 5.8v17.4M76.5 6.0v16.9M77.5 6.1v16.8M78.5 5.6v17.8M79.5 5.1v18.8M80.5 4.7v19.6M81.5 5.5v17.9M82.5 4.3v20.3M83.5 5.3v18.5M84.5 5.2v18.6M85.5 5.6v17.8M86.5 5.4v18.1M87.5 5.4v18.1M88.5 5.1v18.8M89.5 5.4v18.3M90.5 5.8v17.4M91.5 4.0v21.0M92.5 5.9v17.3M93.5 5.1v18.9M94.5 6.1v16.9M95.5 6.0v17.0M96.5 5.5v18.0M97.5 6.0v17.0M98.5 5.9v17.2M99.5 6.1v16.8M100.5 6.0v17.1M101.5 5.2v18.6M102.5 4.7v19.6M103.5 6.2v16.5M104.5 5.3v18.4M105.5 6.2v16.7M106.5 5.9v17.2M107.5 5.6v17.9M108.5 5.5v18.0M109.5 5.6v17.8M110.5 5.5v18.1M111.5 5.0v18.9M112.5 5.3v18.4M113.5 5.6v17.8M114.5 5.5v18.1M115.5 5.3v18.4M116.5 6.3v16.5M117.5 5.7v17.7M118.5 5.7v17.5M119.5 6.3v16.5M120.5 6.2v16.6M121.5 5.5v18.0M122.5 6.1v16.9M123.5 5.7v17.7M124.5 5.1v18.9M125.5 5.5v17.9M126.5 6.1v16.8M127.5 5.0v18.9M128.5 6.0v16.9M129.5 6.0v16.9M130.5 5.7v17.6M131.5 5.7v17.5M132.5 5.8v17.4M133.5 5.0v18.9M134.5 5.9v17.3M135.5 5.1v18.8M136.5 6.1v16.8M137.5 5.3v18.4M138.5 6.1v16.8" stroke="#6dbbd6" stroke-width="1"/></svg>
<svg style="left:1152px;top:587.5px;" width="139" height="29" viewBox="0 0 139 29"><path d="M0.5 10.5v8.0M1.5 5.1v18.9M2.5 5.5v18.0M3.5 5.4v18.3M4.5 5.0v19.0M5.5 5.2v18.7M6.5 5.4v18.1M7.5 5.3v18.3M8.5 5.1v18.9M9.5 5.3v18.4M10.5 5.5v18.0M11.5 5.1v18.9M12.5 5.4v18.1M13.5 5.2v18.6M14.5 5.2v18.6M15.5 5.3v18.5M16.5 5.0v19.0M17.5 5.4v18.2M18.5 5.2v18.6M19.5 5.4v18.1M20.5 5.0v19.0M21.5 5.4v18.1M22.5 5.2v18.5M23.5 5.1v18.8M24.5 5.1v18.9M25.5 5.5v18.1M26.5 4.9v19.2M27.5 4.9v19.2M28.5 4.9v19.2M29.5 4.9v19.2M30.5 4.9v19.2M31.5 4.9v19.2M32.5 4.9v19.2M33.5 4.9v19.2M34.5 4.9v19.2M35.5 4.9v19.2M36.5 4.9v19.2M37.5 4.9v19.2M38.5 5.4v18.2M39.5 5.3v18.4M40.5 5.5v18.1M41.5 5.2v18.6M42.5 5.2v18.6M43.5 5.2v18.6M44.5 5.5v18.1M45.5 5.2v18.6M46.5 5.4v18.1M47.5 5.1v18.8M48.5 5.3v18.5M49.5 5.5v18.1M50.5 5.0v19.0M51.5 5.0v18.9M52.5 5.3v18.3M53.5 5.0v18.9M54.5 5.4v18.3M55.5 5.2v18.5M56.5 5.2v18.6M57.5 5.1v18.8M58.5 5.5v18.1M59.5 5.5v18.0M60.5 5.4v18.1M61.5 5.3v18.4M62.5 5.1v18.8M63.5 5.1v18.7M64.5 5.4v18.1M65.5 5.1v18.7M66.5 5.4v18.2M67.5 5.5v18.0M68.5 5.3v18.5M69.5 5.0v18.9M70.5 5.0v18.9M71.5 5.3v18.4M72.5 5.1v18.8M73.5 5.4v18.2M74.5 5.4v18.2M75.5 5.0v19.0M76.5 5.2v18.7M77.5 5.4v18.2M78.5 5.3v18.3M79.5 5.1v18.8M80.5 5.5v18.1M81.5 5.4v18.2M82.5 5.1v18.8M83.5 5.4v18.2M84.5 5.3v18.4M85.5 5.3v18.4M86.5 5.3v18.5M87.5 5.3v18.3M88.5 5.4v18.2M89.5 5.1v18.8M90.5 5.1v18.8M91.5 5.0v18.9M92.5 5.5v18.0M93.5 5.4v18.2M94.5 5.1v18.9M95.5 5.3v18.3M96.5 5.8v17.4M97.5 5.6v17.7M98.5 5.7v17.6M99.5 5.6v17.9M100.5 5.8v17.4M101.5 5.6v17.7M102.5 5.9v17.2M103.5 5.7v17.7M104.5 5.8v17.5M105.5 5.9v17.3M106.5 5.7v17.6M107.5 5.9v17.2M108.5 5.5v18.0M109.5 5.8v17.3M110.5 5.2v18.6M111.5 5.5v18.0M112.5 5.1v18.7M113.5 5.1v18.8M114.5 5.3v18.3M115.5 5.2v18.6M116.5 5.3v18.5M117.5 5.2v18.7M118.5 5.4v18.2M119.5 5.5v18.0M120.5 5.5v18.1M121.5 5.0v18.9M122.5 5.0v19.0M123.5 5.4v18.3M124.5 5.1v18.7M125.5 5.4v18.2M126.5 5.2v18.6M127.5 5.3v18.4M128.5 5.2v18.6M129.5 5.0v18.9M130.5 5.1v18.9M131.5 5.0v18.9M132.5 5.1v18.8M133.5 5.3v18.5M134.5 5.4v18.2M135.5 5.1v18.8M136.5 5.2v18.6M137.5 5.4v18.1M138.5 5.3v18.4" stroke="#6dbbd6" stroke-width="1"/></svg>
<svg style="left:1152px;top:616.5px;" width="139" height="29" viewBox="0 0 139 29"><path d="M0.5 10.5v8.0M1.5 5.9v17.2M2.5 6.2v16.5M3.5 6.0v16.9M4.5 5.9v17.3M5.5 6.2v16.6M6.5 6.0v17.0M7.5 8.7v11.6M8.5 5.9v17.2M9.5 6.6v15.9M10.5 6.5v16.1M11.5 5.8v17.4M12.5 6.0v17.0M13.5 8.7v11.6M14.5 6.0v17.0M15.5 6.5v16.1M16.5 6.3v16.4M17.5 6.2v16.5M18.5 6.4v16.2M19.5 6.5v16.0M20.5 8.7v11.6M21.5 6.1v16.8M22.5 6.3v16.3M23.5 6.1v16.9M24.5 5.8v17.4M25.5 6.6v15.9M26.5 6.4v16.2M27.5 8.7v11.6M28.5 6.1v16.9M29.5 6.3v16.5M30.5 6.2v16.5M31.5 6.4v16.2M32.5 6.0v17.0M33.5 8.7v11.6M34.5 6.2v16.5M35.5 5.9v17.1M36.5 6.4v16.2M37.5 6.3v16.4M38.5 5.8v17.3M39.5 6.4v16.2M40.5 8.7v11.6M41.5 6.6v15.9M42.5 6.1v16.9M43.5 5.9v17.1M44.5 6.6v15.9M45.5 6.2v16.6M46.5 8.7v11.6M47.5 6.3v16.3M48.5 6.4v16.2M49.5 6.3v16.4M50.5 6.5v16.0M51.5 5.9v17.3M52.5 6.4v16.1M53.5 8.7v11.6M54.5 6.1v16.8M55.5 6.1v16.9M56.5 6.2v16.6M57.5 6.2v16.6M58.5 5.9v17.3M59.5 6.5v16.1M60.5 6.4v16.1M61.5 8.7v11.6M62.5 6.0v17.0M63.5 6.3v16.5M64.5 6.3v16.4M65.5 6.5v15.9M66.5 6.5v16.0M67.5 6.1v16.8M68.5 6.4v16.2M69.5 8.7v11.6M70.5 6.4v16.2M71.5 6.4v16.3M72.5 6.4v16.1M73.5 5.9v17.3M74.5 6.1v16.8M75.5 6.2v16.6M76.5 8.7v11.6M77.5 5.9v17.1M78.5 6.2v16.7M79.5 6.5v16.0M80.5 6.5v16.1M81.5 5.8v17.3M82.5 6.3v16.3M83.5 8.7v11.6M84.5 6.5v16.0M85.5 5.9v17.2M86.5 6.4v16.2M87.5 6.1v16.7M88.5 6.0v17.0M89.5 6.2v16.7M90.5 8.7v11.6M91.5 6.4v16.2M92.5 6.0v16.9M93.5 6.4v16.2M94.5 6.1v16.8M95.5 5.8v17.3M96.5 5.9v17.3M97.5 8.7v11.6M98.5 6.1v16.8M99.5 6.5v16.1M100.5 5.9v17.1M101.5 5.9v17.3M102.5 6.3v16.4M103.5 6.6v15.9M104.5 8.7v11.6M105.5 6.3v16.5M106.5 5.9v17.2M107.5 6.0v17.0M108.5 6.3v16.5M109.5 6.2v16.7M110.5 6.2v16.6M111.5 6.1v16.9M112.5 6.1v16.8M113.5 6.1v16.9M114.5 6.4v16.1M115.5 6.0v17.1M116.5 6.6v15.9M117.5 6.4v16.2M118.5 6.2v16.7M119.5 6.6v15.8M120.5 6.1v16.8M121.5 6.3v16.3M122.5 6.3v16.3M123.5 6.5v15.9M124.5 6.3v16.4M125.5 6.1v16.7M126.5 6.6v15.9M127.5 5.9v17.1M128.5 5.8v17.4M129.5 6.2v16.6M130.5 6.2v16.7M131.5 5.9v17.1M132.5 6.1v16.8M133.5 6.1v16.9M134.5 6.2v16.6M135.5 6.2v16.6M136.5 6.3v16.4M137.5 6.5v16.0M138.5 6.0v17.0" stroke="#6dbbd6" stroke-width="1"/></svg>
<svg style="left:1152px;top:645.5px;" width="139" height="29" viewBox="0 0 139 29"><path d="M0.5 9.5v10.0M1.5 5.9v17.3M2.5 5.8v17.3M3.5 5.5v17.9M4.5 5.2v18.7M5.5 5.6v17.7M6.5 5.3v18.4M7.5 5.7v17.5M8.5 5.4v18.3M9.5 5.6v17.8M10.5 5.3v18.5M11.5 5.7v17.5M12.5 5.4v18.2M13.5 5.1v18.8M14.5 5.8v17.4M15.5 5.8v17.4M16.5 5.9v17.2M17.5 5.1v18.7M18.5 5.3v18.4M19.5 5.8v17.4M20.5 6.1v16.8M21.5 5.6v17.7M22.5 5.4v18.1M23.5 6.0v17.0M24.5 5.7v17.7M25.5 5.7v17.5M26.5 5.2v18.6M27.5 5.9v17.2M28.5 5.3v18.4M29.5 5.8v17.4M30.5 5.5v18.0M31.5 6.1v16.9M32.5 5.9v17.1M33.5 5.2v18.5M34.5 5.3v18.4M35.5 6.0v17.0M36.5 5.9v17.1M37.5 5.4v18.1M38.5 5.9v17.2M39.5 5.6v17.9M40.5 6.0v17.0M41.5 5.2v18.6M42.5 5.5v18.0M43.5 5.4v18.3M44.5 5.3v18.4M45.5 5.1v18.7M46.5 5.9v17.2M47.5 5.8v17.3M48.5 5.8v17.3M49.5 5.3v18.3M50.5 5.9v17.1M51.5 6.0v17.1M52.5 4.9v19.2M53.5 6.0v17.0M54.5 5.2v18.6M55.5 5.5v17.9M56.5 5.2v18.7M57.5 5.6v17.8M58.5 5.7v17.6M59.5 5.2v18.6M60.5 5.8v17.5M61.5 4.9v19.2M62.5 6.0v17.0M63.5 5.6v17.8M64.5 5.3v18.5M65.5 5.9v17.2M66.5 5.2v18.6M67.5 5.5v17.9M68.5 5.2v18.7M69.5 5.3v18.5M70.5 5.4v18.2M71.5 6.0v17.0M72.5 5.8v17.4M73.5 5.9v17.3M74.5 5.2v18.5M75.5 5.2v18.6M76.5 5.3v18.3M77.5 5.8v17.4M78.5 5.7v17.6M79.5 5.5v18.1M80.5 5.6v17.9M81.5 5.3v18.5M82.5 5.1v18.7M83.5 5.7v17.7M84.5 5.4v18.2M85.5 5.4v18.3M86.5 5.2v18.6M87.5 5.2v18.6M88.5 4.9v19.2M89.5 5.2v18.7M90.5 5.7v17.6M91.5 5.3v18.4M92.5 5.7v17.7M93.5 5.6v17.8M94.5 5.2v18.5M95.5 5.1v18.8M96.5 5.2v18.7M97.5 6.1v16.9M98.5 5.8v17.4M99.5 5.6v17.8M100.5 4.9v19.2M101.5 5.8v17.4M102.5 5.5v18.0M103.5 5.8v17.4M104.5 5.3v18.4M105.5 5.9v17.2M106.5 5.3v18.4M107.5 5.5v17.9M108.5 5.7v17.6M109.5 5.1v18.7M110.5 5.6v17.8M111.5 5.4v18.2M112.5 5.1v18.8M113.5 5.2v18.7M114.5 4.9v19.2M115.5 5.8v17.3M116.5 5.2v18.7M117.5 4.9v19.2M118.5 5.8v17.5M119.5 5.5v18.1M120.5 5.2v18.6M121.5 5.8v17.4M122.5 5.5v18.1M123.5 4.9v19.2M124.5 5.9v17.2M125.5 5.4v18.2M126.5 5.9v17.1M127.5 5.9v17.3M128.5 5.2v18.6M129.5 6.0v16.9M130.5 4.9v19.2M131.5 6.0v17.0M132.5 5.7v17.6M133.5 6.1v16.8M134.5 5.8v17.4M135.5 5.4v18.2M136.5 5.9v17.2M137.5 5.8v17.3M138.5 5.3v18.3" stroke="#6dbbd6" stroke-width="1"/></svg>
<svg style="left:1152px;top:674.5px;" width="139" height="29" viewBox="0 0 139 29"><path d="M0.5 6.8v15.5M1.5 6.8v15.5M2.5 6.3v16.4M3.5 6.6v15.8M4.5 11.5v6.0M5.5 6.6v15.8M6.5 6.2v16.7M7.5 6.2v16.7M8.5 6.7v15.7M9.5 6.9v15.3M10.5 11.5v6.0M11.5 5.7v17.7M12.5 5.6v17.8M13.5 6.7v15.7M14.5 6.3v16.5M15.5 5.4v18.3M16.5 6.4v16.2M17.5 11.5v6.0M18.5 6.1v16.9M19.5 6.1v16.9M20.5 6.4v16.2M21.5 6.8v15.5M22.5 6.3v16.3M23.5 11.5v6.0M24.5 6.4v16.2M25.5 6.1v16.9M26.5 6.2v16.6M27.5 5.3v18.3M28.5 6.3v16.5M29.5 6.5v16.0M30.5 11.5v6.0M31.5 6.2v16.5M32.5 6.2v16.5M33.5 6.5v16.1M34.5 6.9v15.3M35.5 6.4v16.2M36.5 6.0v17.0M37.5 11.5v6.0M38.5 6.7v15.6M39.5 6.6v15.7M40.5 6.2v16.5M41.5 6.1v16.9M42.5 5.4v18.2M43.5 6.5v16.1M44.5 5.5v18.0M45.5 11.5v6.0M46.5 6.1v16.8M47.5 6.6v15.9M48.5 6.2v16.7M49.5 6.6v15.7M50.5 6.1v16.8M51.5 6.7v15.7M52.5 11.5v6.0M53.5 6.4v16.2M54.5 6.6v15.9M55.5 6.2v16.6M56.5 6.4v16.2M57.5 6.5v16.1M58.5 11.5v6.0M59.5 6.8v15.3M60.5 6.5v16.0M61.5 6.3v16.4M62.5 6.5v15.9M63.5 6.8v15.4M64.5 6.5v16.0M65.5 6.1v16.8M66.5 11.5v6.0M67.5 6.2v16.5M68.5 5.5v18.0M69.5 5.3v18.3M70.5 6.7v15.6M71.5 6.6v15.8M72.5 6.2v16.7M73.5 11.5v6.0M74.5 6.4v16.2M75.5 6.3v16.3M76.5 6.7v15.6M77.5 6.6v15.8M78.5 6.0v16.9M79.5 5.7v17.7M80.5 11.5v6.0M81.5 6.9v15.3M82.5 6.5v16.1M83.5 6.2v16.7M84.5 6.0v17.0M85.5 6.7v15.6M86.5 6.6v15.8M87.5 11.5v6.0M88.5 6.2v16.7M89.5 6.5v16.0M90.5 6.7v15.7M91.5 6.7v15.6M92.5 6.2v16.5M93.5 6.9v15.2M94.5 11.5v6.0M95.5 6.4v16.3M96.5 6.2v16.7M97.5 6.8v15.4M98.5 6.0v17.0M99.5 6.4v16.1M100.5 6.7v15.7M101.5 11.5v6.0M102.5 6.3v16.4M103.5 5.4v18.2M104.5 6.3v16.3M105.5 6.6v15.9M106.5 6.7v15.7M107.5 6.1v16.8M108.5 6.6v15.8M109.5 11.5v6.0M110.5 6.4v16.1M111.5 6.4v16.2M112.5 6.5v16.0M113.5 6.5v16.0M114.5 6.5v16.0M115.5 6.1v16.8M116.5 11.5v6.0M117.5 6.3v16.4M118.5 6.4v16.2M119.5 6.0v17.0M120.5 6.6v15.7M121.5 6.3v16.5M122.5 11.5v6.0M123.5 6.7v15.5M124.5 6.7v15.5M125.5 6.8v15.5M126.5 6.2v16.6M127.5 6.6v15.8M128.5 5.6v17.9M129.5 11.5v6.0M130.5 6.2v16.7M131.5 6.3v16.3M132.5 6.4v16.3M133.5 6.3v16.4M134.5 6.3v16.4M135.5 6.8v15.4M136.5 6.5v16.0M137.5 5.6v17.9M138.5 6.4v16.3" stroke="#6dbbd6" stroke-width="1"/></svg>
<svg style="left:1152px;top:703.5px;" width="139" height="29" viewBox="0 0 139 29"><path d="M0.5 6.8v15.4M1.5 6.7v15.6M2.5 6.5v16.0M3.5 6.6v15.8M4.5 6.7v15.6M5.5 6.4v16.1M6.5 6.7v15.6M7.5 7.1v14.7M8.5 6.6v15.8M9.5 7.1v14.9M10.5 5.9v17.3M11.5 6.5v15.9M12.5 6.6v15.9M13.5 6.3v16.3M14.5 7.1v14.7M15.5 7.2v14.7M16.5 6.6v15.8M17.5 7.0v14.9M18.5 6.7v15.7M19.5 7.2v14.6M20.5 6.9v15.1M21.5 6.3v16.4M22.5 6.4v16.2M23.5 5.9v17.3M24.5 6.7v15.7M25.5 5.5v17.9M26.5 6.6v15.9M27.5 6.8v15.5M28.5 5.9v17.2M29.5 6.7v15.6M30.5 6.3v16.3M31.5 7.0v15.0M32.5 5.7v17.6M33.5 6.7v15.7M34.5 6.6v15.8M35.5 6.4v16.2M36.5 6.4v16.2M37.5 6.6v15.8M38.5 7.2v14.6M39.5 6.8v15.3M40.5 7.0v14.9M41.5 7.0v15.0M42.5 6.7v15.6M43.5 6.6v15.9M44.5 6.3v16.4M45.5 6.4v16.3M46.5 5.8v17.3M47.5 6.5v16.0M48.5 7.0v14.9M49.5 6.5v16.0M50.5 5.9v17.2M51.5 7.2v14.6M52.5 6.5v16.1M53.5 6.7v15.6M54.5 5.6v17.8M55.5 7.0v15.0M56.5 5.9v17.3M57.5 6.9v15.2M58.5 7.2v14.7M59.5 6.8v15.4M60.5 7.2v14.6M61.5 6.9v15.3M62.5 7.0v15.0M63.5 6.9v15.1M64.5 6.4v16.2M65.5 7.2v14.6M66.5 7.0v15.0M67.5 6.6v15.8M68.5 6.8v15.4M69.5 6.5v16.0M70.5 5.7v17.6M71.5 7.0v15.1M72.5 7.0v15.0M73.5 6.6v15.8M74.5 6.4v16.2M75.5 7.0v15.0M76.5 6.4v16.1M77.5 7.1v14.8M78.5 5.5v17.9M79.5 7.2v14.7M80.5 5.6v17.8M81.5 5.9v17.2M82.5 7.0v15.0M83.5 6.4v16.2M84.5 7.0v14.9M85.5 6.7v15.7M86.5 7.0v15.0M87.5 6.9v15.1M88.5 5.8v17.4M89.5 6.0v17.0M90.5 6.5v15.9M91.5 6.4v16.2M92.5 6.4v16.1M93.5 6.5v16.0M94.5 6.5v15.9M95.5 6.7v15.7M96.5 6.8v15.4M97.5 6.7v15.5M98.5 6.6v15.8M99.5 6.6v15.8M100.5 5.7v17.6M101.5 5.7v17.6M102.5 6.7v15.5M103.5 6.6v15.7M104.5 6.4v16.2M105.5 7.2v14.7M106.5 6.9v15.1M107.5 7.0v14.9M108.5 6.4v16.2M109.5 7.0v14.9M110.5 6.9v15.2M111.5 6.3v16.3M112.5 6.3v16.4M113.5 6.7v15.6M114.5 7.1v14.9M115.5 6.4v16.1M116.5 5.9v17.1M117.5 6.7v15.6M118.5 6.4v16.2M119.5 6.8v15.5M120.5 6.4v16.2M121.5 6.9v15.2M122.5 6.8v15.4M123.5 6.4v16.3M124.5 5.9v17.1M125.5 6.4v16.1M126.5 6.8v15.4M127.5 6.7v15.6M128.5 5.9v17.3M129.5 6.8v15.3M130.5 7.0v15.0M131.5 5.9v17.1M132.5 6.6v15.7M133.5 6.8v15.3M134.5 6.9v15.1M135.5 6.8v15.5M136.5 6.4v16.2M137.5 6.9v15.1M138.5 6.3v16.4" stroke="#6dbbd6" stroke-width="1"/></svg>
<svg style="left:1152px;top:732.5px;" width="139" height="29" viewBox="0 0 139 29"><path d="M0.5 3.5v22.0M1.5 9.0v11.1M2.5 4.4v20.1M3.5 11.2v6.6M4.5 5.6v17.7M5.5 12.8v3.5M6.5 12.2v4.5M7.5 12.5v3.9M8.5 3.6v21.8M9.5 9.6v9.8M10.5 10.4v8.1M11.5 10.9v7.2M12.5 12.5v4.1M13.5 12.3v4.4M14.5 11.9v5.1M15.5 12.1v4.8M16.5 3.9v21.2M17.5 9.3v10.4M18.5 5.2v18.7M19.5 11.2v6.5M20.5 12.1v4.7M21.5 11.9v5.2M22.5 11.9v5.2M23.5 12.2v4.7M24.5 3.9v21.2M25.5 10.0v9.0M26.5 10.8v7.4M27.5 11.5v6.0M28.5 12.3v4.4M29.5 11.9v5.1M30.5 12.1v4.8M31.5 3.4v22.3M32.5 9.7v9.5M33.5 4.8v19.4M34.5 11.5v5.9M35.5 12.4v4.1M36.5 12.1v4.8M37.5 12.0v4.9M38.5 11.9v5.1M39.5 3.9v21.1M40.5 9.9v9.2M41.5 11.0v7.1M42.5 11.6v5.8M43.5 12.1v4.8M44.5 12.3v4.4M45.5 12.0v4.9M46.5 12.2v4.5M47.5 3.7v21.5M48.5 10.0v9.0M49.5 5.2v18.7M50.5 5.9v17.3M51.5 12.1v4.8M52.5 12.0v5.0M53.5 12.4v4.2M54.5 12.7v3.5M55.5 4.1v20.9M56.5 4.3v20.3M57.5 11.3v6.4M58.5 5.7v17.7M59.5 11.9v5.2M60.5 12.7v3.6M61.5 12.3v4.4M62.5 3.3v22.3M63.5 9.5v10.0M64.5 10.2v8.6M65.5 11.2v6.5M66.5 6.1v16.7M67.5 12.2v4.6M68.5 12.1v4.7M69.5 12.3v4.4M70.5 3.6v21.9M71.5 9.4v10.3M72.5 10.3v8.5M73.5 11.4v6.3M74.5 6.3v16.4M75.5 12.3v4.5M76.5 12.6v3.9M77.5 12.1v4.8M78.5 4.0v21.0M79.5 4.3v20.4M80.5 10.5v7.9M81.5 5.6v17.9M82.5 12.3v4.3M83.5 12.6v3.9M84.5 12.0v5.1M85.5 3.6v21.9M86.5 9.0v11.0M87.5 4.7v19.7M88.5 11.1v6.7M89.5 12.5v4.0M90.5 12.6v3.8M91.5 12.4v4.1M92.5 12.7v3.6M93.5 3.9v21.3M94.5 10.0v8.9M95.5 10.8v7.5M96.5 11.2v6.6M97.5 6.0v16.9M98.5 12.2v4.7M99.5 12.2v4.7M100.5 12.5v4.1M101.5 3.9v21.3M102.5 9.4v10.2M103.5 5.1v18.9M104.5 11.5v6.0M105.5 12.4v4.1M106.5 12.0v4.9M107.5 12.3v4.3M108.5 12.8v3.4M109.5 3.8v21.3M110.5 4.3v20.5M111.5 10.8v7.3M112.5 11.7v5.6M113.5 12.5v4.0M114.5 11.9v5.2M115.5 12.6v3.8M116.5 3.8v21.5M117.5 9.4v10.2M118.5 4.4v20.1M119.5 11.5v6.1M120.5 6.0v17.0M121.5 12.0v5.0M122.5 12.7v3.6M123.5 12.4v4.1M124.5 3.7v21.5M125.5 9.7v9.6M126.5 5.0v19.0M127.5 11.1v6.7M128.5 5.9v17.2M129.5 12.2v4.6M130.5 12.5v4.0M131.5 12.4v4.2M132.5 4.0v21.0M133.5 10.0v9.0M134.5 5.2v18.7M135.5 5.4v18.3M136.5 12.9v3.2M137.5 12.4v4.1M138.5 12.5v4.0" stroke="#6ed398" stroke-width="1"/></svg>
<svg style="left:1152px;top:761.5px;" width="139" height="29" viewBox="0 0 139 29"><path d="M0.5 3.6v21.8M1.5 8.7v11.7M2.5 8.9v11.3M3.5 9.5v9.9M4.5 8.7v11.7M5.5 9.2v10.5M6.5 9.1v10.8M7.5 9.1v10.7M8.5 3.4v22.2M9.5 7.9v13.1M10.5 4.9v19.1M11.5 9.8v9.4M12.5 8.7v11.6M13.5 9.4v10.1M14.5 8.9v11.3M15.5 9.9v9.2M16.5 4.0v21.0M17.5 7.9v13.2M18.5 8.8v11.5M19.5 8.9v11.3M20.5 6.3v16.4M21.5 8.7v11.6M22.5 9.0v11.0M23.5 10.0v9.0M24.5 4.2v20.7M25.5 9.3v10.4M26.5 8.5v11.9M27.5 9.5v10.1M28.5 9.7v9.7M29.5 9.7v9.5M30.5 8.8v11.3M31.5 3.7v21.6M32.5 7.6v13.9M33.5 8.7v11.6M34.5 8.7v11.6M35.5 6.1v16.9M36.5 8.7v11.6M37.5 9.2v10.6M38.5 9.7v9.6M39.5 3.4v22.2M40.5 8.8v11.4M41.5 8.8v11.4M42.5 9.8v9.4M43.5 5.9v17.2M44.5 9.9v9.3M45.5 9.2v10.6M46.5 9.7v9.7M47.5 3.6v21.8M48.5 9.1v10.8M49.5 9.6v9.7M50.5 9.8v9.5M51.5 9.3v10.3M52.5 9.0v11.0M53.5 9.1v10.9M54.5 9.6v9.9M55.5 4.1v20.8M56.5 4.5v20.1M57.5 9.9v9.2M58.5 5.8v17.4M59.5 9.8v9.4M60.5 9.9v9.2M61.5 10.0v9.0M62.5 3.5v22.1M63.5 8.9v11.2M64.5 4.6v19.8M65.5 9.4v10.3M66.5 9.9v9.2M67.5 8.5v11.9M68.5 9.2v10.7M69.5 8.5v11.9M70.5 3.6v21.8M71.5 8.2v12.5M72.5 8.8v11.4M73.5 9.5v10.1M74.5 9.8v9.3M75.5 9.2v10.6M76.5 9.4v10.2M77.5 8.7v11.7M78.5 3.8v21.5M79.5 4.4v20.2M80.5 8.6v11.8M81.5 9.0v11.0M82.5 9.6v9.8M83.5 9.8v9.4M84.5 9.1v10.8M85.5 3.3v22.4M86.5 8.4v12.2M87.5 4.9v19.1M88.5 9.8v9.3M89.5 5.7v17.5M90.5 9.8v9.4M91.5 8.6v11.8M92.5 9.1v10.8M93.5 3.6v21.8M94.5 8.2v12.5M95.5 4.5v19.9M96.5 8.5v11.9M97.5 5.9v17.1M98.5 8.8v11.4M99.5 9.0v10.9M100.5 8.9v11.2M101.5 3.5v21.9M102.5 8.9v11.2M103.5 4.8v19.3M104.5 5.5v18.0M105.5 9.6v9.8M106.5 9.7v9.6M107.5 9.0v11.0M108.5 9.2v10.7M109.5 4.2v20.5M110.5 4.7v19.6M111.5 9.1v10.7M112.5 9.7v9.7M113.5 8.9v11.2M114.5 9.7v9.5M115.5 9.6v9.8M116.5 3.5v22.0M117.5 8.3v12.3M118.5 4.8v19.5M119.5 9.8v9.3M120.5 9.9v9.2M121.5 8.8v11.4M122.5 9.4v10.1M123.5 9.3v10.4M124.5 3.5v21.9M125.5 8.5v11.9M126.5 9.5v10.0M127.5 8.7v11.6M128.5 5.8v17.4M129.5 8.8v11.5M130.5 9.6v9.8M131.5 9.8v9.3M132.5 4.0v21.1M133.5 8.9v11.3M134.5 5.0v19.0M135.5 8.6v11.8M136.5 9.5v10.0M137.5 8.6v11.9M138.5 8.9v11.2" stroke="#6ed398" stroke-width="1"/></svg>
<svg style="left:1152px;top:790.5px;" width="139" height="29" viewBox="0 0 139 29"><path d="M0.5 3.2v22.5M1.5 9.7v9.7M2.5 4.4v20.3M3.5 11.2v6.6M4.5 6.0v17.0M5.5 12.2v4.6M6.5 12.3v4.3M7.5 12.2v4.6M8.5 3.6v21.9M9.5 9.8v9.4M10.5 5.0v19.1M11.5 11.4v6.3M12.5 12.1v4.8M13.5 12.3v4.5M14.5 12.1v4.8M15.5 12.2v4.7M16.5 3.5v22.0M17.5 9.8v9.5M18.5 5.1v18.7M19.5 12.0v5.0M20.5 12.8v3.4M21.5 12.5v3.9M22.5 12.1v4.8M23.5 11.9v5.2M24.5 4.1v20.8M25.5 10.3v8.3M26.5 10.9v7.2M27.5 12.0v5.1M28.5 12.7v3.5M29.5 12.0v5.0M30.5 12.9v3.2M31.5 3.6v21.9M32.5 8.9v11.2M33.5 4.5v20.0M34.5 11.0v6.9M35.5 11.7v5.5M36.5 12.8v3.3M37.5 12.8v3.5M38.5 12.5v4.0M39.5 3.4v22.1M40.5 10.0v9.1M41.5 10.0v9.0M42.5 11.3v6.5M43.5 12.6v3.9M44.5 12.2v4.6M45.5 12.0v4.9M46.5 12.6v3.8M47.5 4.0v21.0M48.5 9.9v9.2M49.5 4.7v19.5M50.5 5.5v18.0M51.5 12.9v3.2M52.5 12.5v3.9M53.5 12.5v4.1M54.5 12.7v3.7M55.5 3.9v21.3M56.5 4.7v19.7M57.5 10.8v7.5M58.5 11.7v5.6M59.5 12.6v3.8M60.5 12.0v5.1M61.5 12.1v4.8M62.5 3.5v22.1M63.5 9.8v9.4M64.5 4.7v19.5M65.5 11.1v6.8M66.5 6.1v16.7M67.5 12.5v3.9M68.5 12.8v3.5M69.5 12.2v4.6M70.5 3.6v21.7M71.5 9.6v9.8M72.5 10.4v8.3M73.5 11.5v6.0M74.5 12.7v3.6M75.5 12.3v4.5M76.5 12.4v4.2M77.5 12.0v4.9M78.5 3.8v21.3M79.5 4.7v19.5M80.5 11.3v6.4M81.5 12.2v4.5M82.5 12.8v3.5M83.5 12.2v4.6M84.5 12.6v3.8M85.5 3.2v22.7M86.5 9.5v10.1M87.5 4.6v19.9M88.5 10.7v7.7M89.5 5.8v17.4M90.5 12.7v3.5M91.5 12.6v3.9M92.5 12.4v4.1M93.5 3.4v22.2M94.5 9.3v10.4M95.5 10.6v7.8M96.5 11.5v6.1M97.5 6.2v16.5M98.5 12.2v4.6M99.5 12.6v3.8M100.5 12.8v3.3M101.5 3.8v21.4M102.5 9.5v10.1M103.5 11.0v7.0M104.5 5.7v17.6M105.5 12.0v5.0M106.5 12.1v4.7M107.5 12.3v4.5M108.5 12.9v3.2M109.5 3.8v21.4M110.5 4.8v19.4M111.5 11.0v7.1M112.5 12.2v4.6M113.5 12.8v3.4M114.5 12.2v4.6M115.5 12.0v5.1M116.5 3.6v21.8M117.5 9.2v10.7M118.5 4.9v19.2M119.5 11.3v6.3M120.5 5.7v17.6M121.5 12.5v4.1M122.5 12.8v3.4M123.5 12.8v3.4M124.5 3.9v21.1M125.5 9.5v10.0M126.5 4.9v19.2M127.5 11.7v5.5M128.5 6.0v17.1M129.5 12.3v4.3M130.5 12.3v4.5M131.5 11.9v5.1M132.5 3.7v21.7M133.5 9.6v9.7M134.5 5.1v18.7M135.5 5.7v17.6M136.5 12.6v3.8M137.5 12.8v3.3M138.5 12.3v4.3" stroke="#6ed398" stroke-width="1"/></svg>
<svg style="left:1152px;top:819.5px;" width="139" height="29" viewBox="0 0 139 29"><path d="M0.5 3.4v22.1M1.5 8.8v11.4M2.5 9.9v9.1M3.5 11.5v6.1M4.5 12.0v4.9M5.5 12.4v4.1M6.5 12.8v3.5M7.5 12.5v4.0M8.5 3.3v22.4M9.5 9.1v10.8M10.5 10.6v7.7M11.5 11.5v5.9M12.5 6.1v16.9M13.5 12.3v4.4M14.5 12.2v4.6M15.5 12.3v4.4M16.5 3.8v21.5M17.5 9.5v10.0M18.5 5.0v19.0M19.5 11.2v6.5M20.5 12.6v3.7M21.5 12.5v4.0M22.5 12.8v3.3M23.5 12.6v3.7M24.5 4.1v20.9M25.5 10.3v8.4M26.5 10.9v7.2M27.5 5.9v17.2M28.5 12.3v4.5M29.5 12.5v4.0M30.5 12.5v4.1M31.5 3.5v22.0M32.5 9.8v9.4M33.5 4.6v19.7M34.5 11.1v6.8M35.5 12.0v4.9M36.5 12.8v3.4M37.5 12.0v5.1M38.5 12.0v5.0M39.5 3.7v21.7M40.5 9.3v10.4M41.5 4.8v19.5M42.5 11.7v5.7M43.5 6.0v17.0M44.5 12.2v4.5M45.5 12.4v4.3M46.5 12.9v3.3M47.5 3.6v21.9M48.5 10.3v8.3M49.5 5.0v18.9M50.5 5.6v17.8M51.5 12.6v3.8M52.5 12.8v3.5M53.5 12.7v3.7M54.5 12.9v3.3M55.5 4.1v20.8M56.5 9.7v9.6M57.5 11.0v7.0M58.5 6.0v16.9M59.5 12.6v3.8M60.5 12.7v3.5M61.5 12.1v4.8M62.5 3.8v21.5M63.5 9.2v10.7M64.5 4.7v19.5M65.5 11.4v6.2M66.5 11.9v5.2M67.5 12.7v3.7M68.5 12.7v3.6M69.5 12.1v4.7M70.5 3.9v21.2M71.5 9.6v9.9M72.5 5.0v19.0M73.5 11.3v6.3M74.5 11.9v5.1M75.5 12.3v4.4M76.5 12.5v4.1M77.5 12.5v3.9M78.5 4.2v20.6M79.5 4.8v19.5M80.5 10.6v7.8M81.5 5.7v17.6M82.5 12.3v4.3M83.5 12.4v4.2M84.5 12.0v4.9M85.5 3.7v21.6M86.5 9.7v9.7M87.5 10.0v9.1M88.5 11.2v6.6M89.5 12.0v4.9M90.5 12.3v4.5M91.5 12.5v3.9M92.5 12.4v4.3M93.5 3.5v22.0M94.5 9.5v10.0M95.5 10.9v7.1M96.5 11.0v7.0M97.5 12.7v3.5M98.5 12.3v4.3M99.5 11.9v5.1M100.5 12.1v4.8M101.5 4.0v21.0M102.5 9.7v9.6M103.5 11.0v7.0M104.5 11.5v6.0M105.5 12.0v5.0M106.5 12.8v3.4M107.5 12.3v4.5M108.5 12.1v4.8M109.5 3.8v21.4M110.5 4.7v19.6M111.5 10.7v7.6M112.5 5.6v17.8M113.5 12.2v4.6M114.5 12.8v3.4M115.5 12.2v4.6M116.5 3.7v21.6M117.5 9.6v9.8M118.5 10.8v7.4M119.5 11.1v6.8M120.5 5.7v17.6M121.5 12.7v3.6M122.5 12.5v3.9M123.5 12.7v3.7M124.5 4.0v21.1M125.5 9.8v9.4M126.5 5.1v18.9M127.5 11.5v5.9M128.5 6.3v16.4M129.5 10.5v8.0M130.5 9.6v9.7M131.5 8.9v11.2M132.5 4.0v21.0M133.5 8.2v12.6M134.5 5.3v18.4M135.5 5.9v17.1M136.5 9.6v9.7M137.5 10.6v7.8M138.5 10.9v7.3" stroke="#6ed398" stroke-width="1"/></svg>
<svg style="left:1152px;top:0px;" width="139" height="873" viewBox="0 0 139 873"><path d="M0.5 852v4M8.5 852v4M16.5 852v4M24.5 852v4M32.5 852v4M40.5 852v4M48.5 852v4M56.5 852v4M64.5 852v4M72.5 852v4M80.5 852v4M88.5 852v4M96.5 852v4M104.5 852v4M112.5 852v4M120.5 852v4M128.5 852v4M136.5 852v4" stroke="#6ed398" stroke-width="1"/></svg>
<div style="position:absolute;left:1493px;top:503px;width:7px;height:42px;background:#3a3e44;border-radius:3px"></div>
<svg style="left:917px;top:511.20000000000005px;" width="25" height="25" viewBox="0 0 25 25"><circle cx="12.5" cy="12.5" r="12.5" fill="#34383d"/></svg>
<div style="position:absolute;left:917px;top:516.7px;width:25px;text-align:center;font-size:14px;line-height:1;color:#eef0f2;font-weight:bold">1</div>
<svg style="left:917px;top:562.7px;" width="25" height="25" viewBox="0 0 25 25"><circle cx="12.5" cy="12.5" r="12.5" fill="#34383d"/></svg>
<div style="position:absolute;left:917px;top:568.2px;width:25px;text-align:center;font-size:14px;line-height:1;color:#eef0f2;font-weight:bold">2</div>
<svg style="left:917px;top:614.2px;" width="25" height="25" viewBox="0 0 25 25"><circle cx="12.5" cy="12.5" r="12.5" fill="#34383d"/></svg>
<div style="position:absolute;left:917px;top:619.7px;width:25px;text-align:center;font-size:14px;line-height:1;color:#eef0f2;font-weight:bold">3</div>
<svg style="left:917px;top:665.7px;" width="25" height="25" viewBox="0 0 25 25"><circle cx="12.5" cy="12.5" r="12.5" fill="#34383d"/></svg>
<div style="position:absolute;left:917px;top:671.2px;width:25px;text-align:center;font-size:14px;line-height:1;color:#eef0f2;font-weight:bold">4</div>
<svg style="left:917px;top:717.2px;" width="25" height="25" viewBox="0 0 25 25"><circle cx="12.5" cy="12.5" r="12.5" fill="#34383d"/></svg>
<div style="position:absolute;left:917px;top:722.7px;width:25px;text-align:center;font-size:14px;line-height:1;color:#eef0f2;font-weight:bold">5</div>
<svg style="left:917px;top:769.8px;" width="25" height="25" viewBox="0 0 25 25"><circle cx="12.5" cy="12.5" r="12.5" fill="#6bbad4"/></svg>
<div style="position:absolute;left:917px;top:775.3px;width:25px;text-align:center;font-size:14px;line-height:1;color:#1d2a30;font-weight:bold">6</div>
<svg style="left:917px;top:821.0px;" width="25" height="25" viewBox="0 0 25 25"><circle cx="12.5" cy="12.5" r="12.5" fill="#34383d"/></svg>
<div style="position:absolute;left:917px;top:826.5px;width:25px;text-align:center;font-size:14px;line-height:1;color:#eef0f2;font-weight:bold">7</div>
<svg style="left:961px;top:508px;" width="14" height="16" viewBox="0 0 14 16"><path d="M0.3 14 L3 10.2 L6.5 6.6 L10 3.2 L11.6 1.3 C12.6 0.8 13.6 1.6 13.4 3 L12.6 4.6 L10.2 7.6 L8.3 11 L5.2 13.2 L1.6 14.3 Z" fill="#70c3e2"/><circle cx="1.5" cy="7.2" r="1.05" fill="#70c3e2"/><circle cx="3.8" cy="5" r="1.05" fill="#70c3e2"/><circle cx="6" cy="2.8" r="1.05" fill="#70c3e2"/><circle cx="8.3" cy="0.8" r="1.05" fill="#70c3e2"/></svg>
<svg style="left:959px;top:739px;" width="16" height="15" viewBox="0 0 16 15"><rect x="3.5" y="0.5" width="3.5" height="1.5" fill="#6fd894"/><rect x="9" y="0.5" width="3.5" height="1.5" fill="#6fd894"/><rect x="0" y="3" width="4" height="4" fill="#6fd894"/><rect x="12" y="3" width="4" height="4" fill="#6fd894"/><circle cx="8" cy="8" r="5" fill="none" stroke="#6fd894" stroke-width="2"/><path d="M4 14.5 L5 12 M12 14.5 L11 12" stroke="#6fd894" stroke-width="1.3"/></svg>
<div style="position:absolute;left:0px;top:857px;width:1500px;height:16px;background:#3a3d44;"></div>
</body></html>
